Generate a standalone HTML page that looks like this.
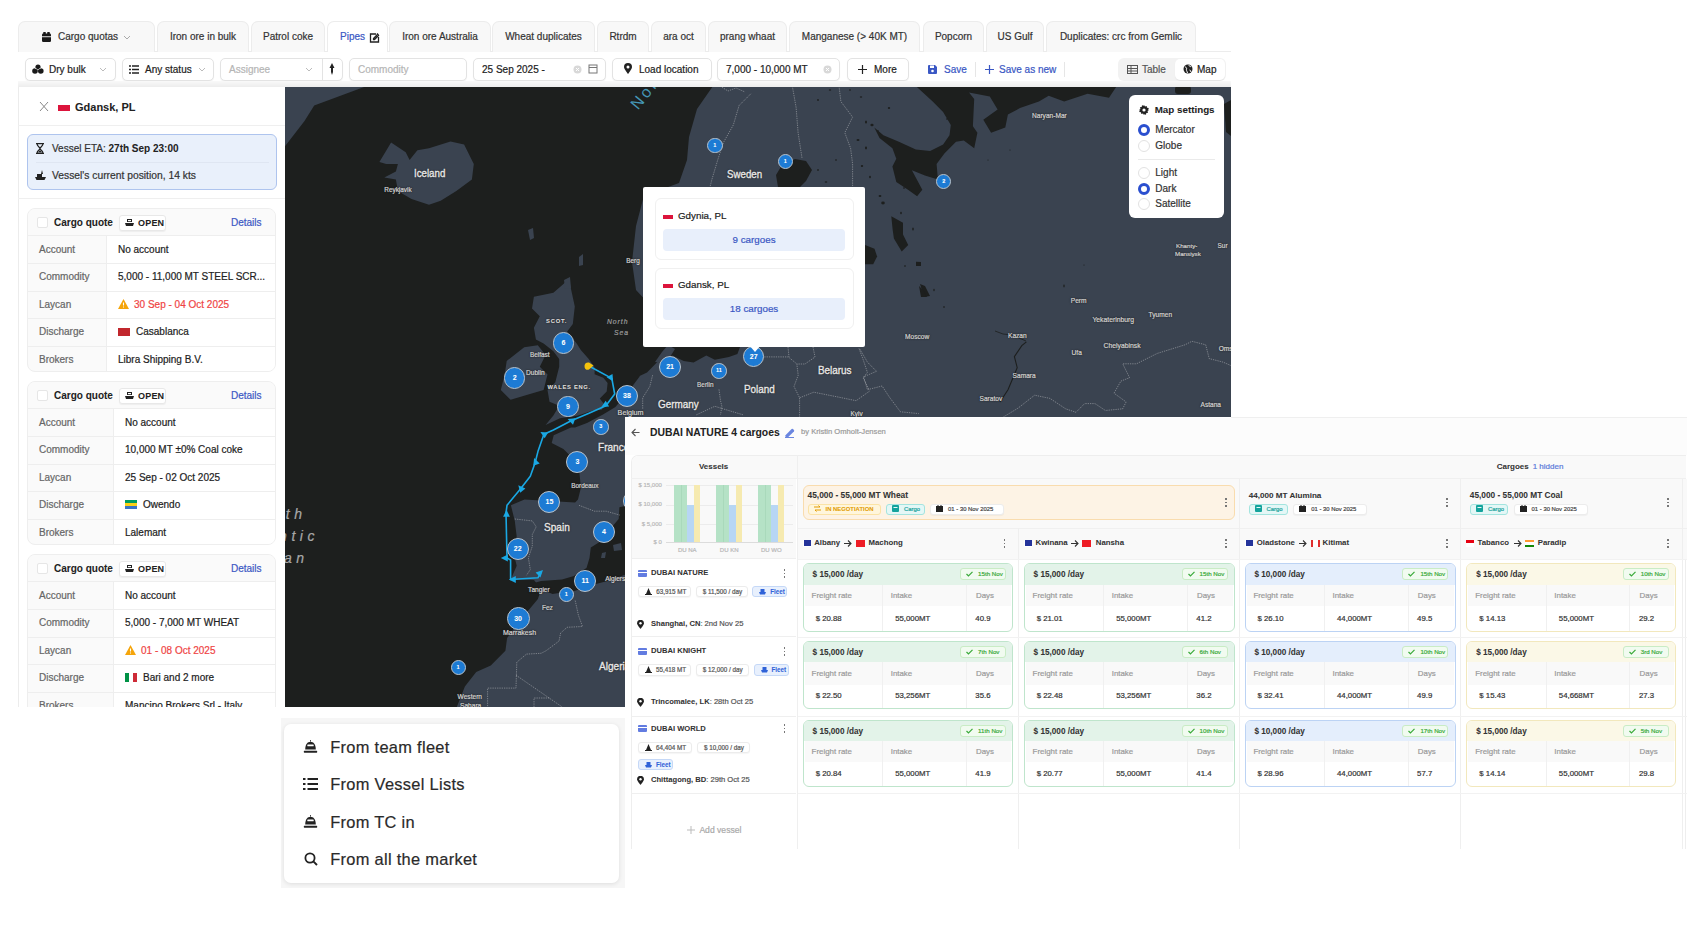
<!DOCTYPE html>
<html><head><meta charset="utf-8">
<style>
*{box-sizing:border-box;margin:0;padding:0}
html,body{width:1698px;height:925px;overflow:hidden;background:#fff;font-family:"Liberation Sans",sans-serif;color:#222;position:relative}
body{-webkit-text-stroke:0.2px currentColor}
[style*="font-weight:700"],b{-webkit-text-stroke:0.05px currentColor}
.a{position:absolute;white-space:nowrap}
.tab{position:absolute;top:21px;height:31px;background:#f8f8f8;border:1px solid #ececec;border-bottom:none;border-radius:7px 7px 0 0;font-size:10px;line-height:30px;text-align:center;color:#333}
.chip{position:absolute;top:58px;height:23px;background:#fff;border:1px solid #e3e3e3;border-radius:5px;box-shadow:0 1px 1px rgba(0,0,0,.05);font-size:10px;line-height:21px;color:#222}
.ph{color:#b5b5b5}
.lbl{font-size:10px;color:#666}
.val{font-size:10px;color:#222}
</style></head><body>

<!-- TABS -->
<div class="a" style="left:18px;top:51px;width:1213px;height:1px;background:#ececec"></div>
<div class="tab" style="left:18px;width:137px;text-align:left">
  <svg class="a" style="left:23px;top:10px" width="9" height="10" viewBox="0 0 9 10"><rect x="0" y="1.5" width="9" height="8.5" rx="1.2" fill="#1a1a1a"/><rect x="1.2" y="0" width="2.6" height="2.5" rx=".6" fill="#1a1a1a"/><rect x="5.2" y="0" width="2.6" height="2.5" rx=".6" fill="#1a1a1a"/><rect x="0" y="4.3" width="9" height="0.9" fill="#f8f8f8"/></svg>
  <span class="a" style="left:39px;top:0">Cargo quotas</span>
  <svg class="a" style="left:104px;top:13px" width="8" height="5" viewBox="0 0 8 5"><path d="M1 1l3 3 3-3" stroke="#aaa" fill="none" stroke-width="1"/></svg>
</div>
<div class="tab" style="left:157px;width:92px">Iron ore in bulk</div>
<div class="tab" style="left:251px;width:74px">Patrol coke</div>
<div class="tab" style="left:327px;width:61px;background:#fff;color:#3a57c4;text-align:left;padding-left:12px">Pipes
  <svg class="a" style="left:41px;top:10px" width="11" height="11" viewBox="0 0 11 11"><path d="M8 1.5l1.5 1.5M4.5 6.5l4-4 1 1-4 4H4.5z" stroke="#222" stroke-width="1.3" fill="none"/><path d="M7 2H1.5v8h8V5" stroke="#222" stroke-width="1.3" fill="none"/></svg>
</div>
<div class="tab" style="left:389px;width:102px">Iron ore Australia</div>
<div class="tab" style="left:492px;width:103px">Wheat duplicates</div>
<div class="tab" style="left:597px;width:52px">Rtrdm</div>
<div class="tab" style="left:651px;width:55px">ara oct</div>
<div class="tab" style="left:708px;width:79px">prang whaat</div>
<div class="tab" style="left:789px;width:131px">Manganese (&gt; 40K MT)</div>
<div class="tab" style="left:923px;width:61px">Popcorn</div>
<div class="tab" style="left:986px;width:58px">US Gulf</div>
<div class="tab" style="left:1046px;width:150px">Duplicates: crc from Gemlic</div>

<!-- FILTER BAR -->
<div class="a" style="left:18px;top:52px;width:1213px;height:34px;background:#fff"></div>
<div class="a" style="left:18px;top:83px;width:267px;height:4px;background:linear-gradient(#fff,#eee)"></div>
<div class="chip" style="left:25px;width:91px">
  <span class="a" style="left:23px;top:0">Dry bulk</span>
</div>
<div class="chip" style="left:122px;width:92px">
  <span class="a" style="left:22px;top:0">Any status</span>
</div>
<div class="chip" style="left:220px;width:123px">
  <span class="a ph" style="left:8px;top:0">Assignee</span>
  <div class="a" style="left:101px;top:0;width:1px;height:21px;background:#e3e3e3"></div>
</div>
<div class="chip" style="left:349px;width:118px"><span class="a ph" style="left:8px;top:0">Commodity</span></div>
<div class="chip" style="left:473px;width:133px"><span class="a" style="left:8px;top:0">25 Sep 2025 -</span></div>
<div class="chip" style="left:612px;width:100px"><span class="a" style="left:26px;top:0">Load location</span></div>
<div class="chip" style="left:717px;width:123px"><span class="a" style="left:8px;top:0">7,000 - 10,000 MT</span></div>
<div class="chip" style="left:847px;width:62px"><span class="a" style="left:26px;top:0">More</span></div>
<span class="a" style="left:944px;top:58px;font-size:10px;line-height:23px;color:#3a57c4">Save</span>
<div class="a" style="left:975px;top:62px;width:1px;height:15px;background:#e6e6e6"></div>
<span class="a" style="left:999px;top:58px;font-size:10px;line-height:23px;color:#3a57c4">Save as new</span>
<div class="a" style="left:1064px;top:62px;width:1px;height:15px;background:#e6e6e6"></div>
<div class="a" style="left:1118px;top:58px;width:108px;height:23px;background:#f2f2f2;border-radius:6px"></div>
<div class="a" style="left:1175px;top:59px;width:50px;height:21px;background:#fff;border-radius:5px;box-shadow:0 1px 1px rgba(0,0,0,.06)"></div>
<span class="a" style="left:1142px;top:58px;font-size:10px;line-height:23px;color:#555">Table</span>
<span class="a" style="left:1197px;top:58px;font-size:10px;line-height:23px;color:#222">Map</span>


<svg class="a" style="left:32px;top:64px" width="12" height="10" viewBox="0 0 12 10"><circle cx="6" cy="3" r="2.6" fill="#1a1a1a"/><circle cx="3" cy="7" r="2.8" fill="#1a1a1a"/><circle cx="8.8" cy="7" r="2.8" fill="#1a1a1a"/><path d="M3 4.3a2.8 2.8 0 0 1 2.5 1.5M8.8 4.3a2.8 2.8 0 0 0-2.5 1.5" stroke="#fff" stroke-width=".7" fill="none"/></svg>
<svg class="a" style="left:99px;top:67px" width="8" height="5" viewBox="0 0 8 5"><path d="M1 1l3 3 3-3" stroke="#bbb" fill="none" stroke-width="1"/></svg>
<svg class="a" style="left:129px;top:65px" width="10" height="9" viewBox="0 0 10 9"><path d="M0 1h2M3 1h7M0 4.5h2M3 4.5h7M0 8h2M3 8h7" stroke="#222" stroke-width="1.3"/></svg>
<svg class="a" style="left:198px;top:67px" width="8" height="5" viewBox="0 0 8 5"><path d="M1 1l3 3 3-3" stroke="#bbb" fill="none" stroke-width="1"/></svg>
<svg class="a" style="left:305px;top:67px" width="8" height="5" viewBox="0 0 8 5"><path d="M1 1l3 3 3-3" stroke="#bbb" fill="none" stroke-width="1"/></svg>
<svg class="a" style="left:329px;top:63px" width="6" height="12" viewBox="0 0 6 12"><path d="M3 0L5.5 5H.5z M2 5h2v4l-1 3-1-3z" fill="#222"/></svg>
<svg class="a" style="left:573px;top:65px" width="9" height="9" viewBox="0 0 9 9"><circle cx="4.5" cy="4.5" r="4" fill="#d8d8d8"/><path d="M3 3l3 3M6 3L3 6" stroke="#fff" stroke-width="1"/></svg>
<svg class="a" style="left:588px;top:64px" width="10" height="10" viewBox="0 0 10 10"><rect x="1" y="1" width="8" height="8" fill="none" stroke="#777" stroke-width="1"/><path d="M1 3.5h8" stroke="#777" stroke-width="1"/></svg>
<svg class="a" style="left:624px;top:63px" width="8" height="11" viewBox="0 0 8 11"><path d="M4 11C4 11 0 6 0 4a4 4 0 018 0c0 2-4 7-4 7z" fill="#222"/><circle cx="4" cy="4" r="1.5" fill="#fff"/></svg>
<svg class="a" style="left:823px;top:65px" width="9" height="9" viewBox="0 0 9 9"><circle cx="4.5" cy="4.5" r="4" fill="#d8d8d8"/><path d="M3 3l3 3M6 3L3 6" stroke="#fff" stroke-width="1"/></svg>
<svg class="a" style="left:858px;top:65px" width="9" height="9" viewBox="0 0 9 9"><path d="M4.5 0v9M0 4.5h9" stroke="#222" stroke-width="1.2"/></svg>
<svg class="a" style="left:928px;top:65px" width="9" height="9" viewBox="0 0 9 9"><path d="M0 1a1 1 0 011-1h6l2 2v6a1 1 0 01-1 1H1a1 1 0 01-1-1z" fill="#3a57c4"/><rect x="2" y="0.5" width="4" height="2.5" fill="#fff"/><circle cx="4.5" cy="6" r="1.3" fill="#fff"/></svg>
<svg class="a" style="left:985px;top:65px" width="9" height="9" viewBox="0 0 9 9"><path d="M4.5 0v9M0 4.5h9" stroke="#3a57c4" stroke-width="1.2"/></svg>
<svg class="a" style="left:1127px;top:65px" width="11" height="9" viewBox="0 0 11 9"><rect x=".5" y=".5" width="10" height="8" fill="none" stroke="#555" stroke-width="1"/><path d="M.5 3.5h10M.5 6h10M4 .5v8" stroke="#555" stroke-width="1"/></svg>
<svg class="a" style="left:1183px;top:64px" width="10" height="10" viewBox="0 0 10 10"><circle cx="5" cy="5" r="4.5" fill="#222"/><path d="M2 3c1 0 2 1 1.5 2S4 7 4.5 9M6 1c0 1 1 2 2 1.5M6.5 6c1 0 1.5 1 1 2" stroke="#fff" stroke-width="1" fill="none"/></svg>

<!-- LEFT PANEL -->
<div class="a" style="left:18px;top:86px;width:1px;height:621px;background:#ececec"></div><div id="left" class="a" style="left:18px;top:86px;width:267px;height:621px;background:transparent;overflow:hidden">
<svg class="a" style="left:21px;top:16px" width="10" height="9" viewBox="0 0 10 9"><path d="M1 0l8 9M9 0L1 9" stroke="#888" stroke-width="1"/></svg>
<div class="a" style="left:40px;top:19px;width:12px;height:6px;background:#dc143c"></div>
<span class="a" style="left:57px;top:13px;font-size:11px;font-weight:700;line-height:17px;color:#222">Gdansk, PL</span>
<div class="a" style="left:0;top:39px;width:267px;height:1px;background:#efefef"></div>
<div class="a" style="left:9px;top:48px;width:250px;height:56px;background:#e9f0fb;border:1px solid #aec4ee;border-radius:6px"></div>
<svg class="a" style="left:18px;top:57px" width="8" height="11" viewBox="0 0 8 11"><path d="M0 .6h8M0 10.4h8M1 .6c0 3 3 3.5 3 4.9S1 7.4 1 10.4M7 .6c0 3-3 3.5-3 4.9s3 1.9 3 4.9" stroke="#222" stroke-width="1.2" fill="none"/><path d="M2 9.5L4 7l2 2.5z" fill="#222"/></svg>
<span class="a" style="left:34px;top:55px;font-size:10px;line-height:15px;color:#333">Vessel ETA: <b style="color:#222">27th Sep 23:00</b></span>
<div class="a" style="left:18px;top:76px;width:233px;height:1px;background:#dfe6f2"></div>
<svg class="a" style="left:17px;top:84px" width="11" height="10" viewBox="0 0 11 10"><path d="M0 7h11l-1.5 3H1.5z M2 4h5v3H2z M7 0l1 4H6z" fill="#222"/></svg>
<span class="a" style="left:34px;top:82px;font-size:10.3px;line-height:15px;color:#333">Vessel's current position, 14 kts</span>
<div class="a" style="left:0;top:112px;width:267px;height:1px;background:#efefef"></div>
<div class="a" style="left:9px;top:122px;width:249px;height:164px;border:1px solid #eeeeee;border-radius:8px;overflow:hidden;background:#fafafa"><div class="a" style="left:0;top:0;width:249px;height:27px;background:#fafafa;border-bottom:1px solid #eee"></div><div class="a" style="left:9px;top:8px;width:11px;height:11px;background:#fff;border:1px solid #e6e6e6;border-radius:2px"></div><span class="a" style="left:26px;top:6px;font-size:10px;font-weight:700;line-height:15px;color:#222">Cargo quote</span><div class="a" style="left:91px;top:6px;width:47px;height:16px;background:#fff;border:1px solid #e8e8e8;border-radius:3px;box-shadow:0 1px 1px rgba(0,0,0,.05)"></div><svg class="a" style="left:97px;top:10px" width="9" height="8" viewBox="0 0 9 8"><path d="M2 0h5v3H2z M0 4h9l-1 3H1z" fill="#222"/><rect x="3" y="1" width="3" height="1.2" fill="#fff"/></svg><span class="a" style="left:110px;top:7px;font-size:9px;font-weight:700;line-height:14px;color:#222;letter-spacing:.2px">OPEN</span><span class="a" style="left:203px;top:6px;font-size:10px;line-height:15px;color:#3a57c4">Details</span><div class="a" style="left:78px;top:27px;width:171px;height:137px;background:#fff;border-left:1px solid #eee"></div><span class="a lbl" style="left:11px;top:27.0px;line-height:27px">Account</span><span class="a val" style="left:90px;top:27.0px;line-height:27px">No account</span><div class="a" style="left:0;top:54.4px;width:249px;height:1px;background:#eee"></div><span class="a lbl" style="left:11px;top:54.4px;line-height:27px">Commodity</span><span class="a val" style="left:90px;top:54.4px;line-height:27px">5,000 - 11,000 MT STEEL SCR...</span><div class="a" style="left:0;top:81.8px;width:249px;height:1px;background:#eee"></div><span class="a lbl" style="left:11px;top:81.8px;line-height:27px">Laycan</span><span class="a val" style="left:90px;top:81.8px;line-height:27px"><svg style="vertical-align:-1px;margin-right:5px" width="11" height="10" viewBox="0 0 11 10"><path d="M5.5 0L11 10H0z" fill="#f5a50b"/><path d="M5.5 3.5v3M5.5 7.5v1" stroke="#fff" stroke-width="1.1"/></svg><span style="color:#ef4444">30 Sep - 04 Oct 2025</span></span><div class="a" style="left:0;top:109.2px;width:249px;height:1px;background:#eee"></div><span class="a lbl" style="left:11px;top:109.2px;line-height:27px">Discharge</span><span class="a val" style="left:90px;top:109.2px;line-height:27px"><span style="display:inline-block;width:12px;height:8px;vertical-align:-1px;margin-right:6px;background:#c1272d"></span>Casablanca</span><div class="a" style="left:0;top:136.6px;width:249px;height:1px;background:#eee"></div><span class="a lbl" style="left:11px;top:136.6px;line-height:27px">Brokers</span><span class="a val" style="left:90px;top:136.6px;line-height:27px">Libra Shipping B.V.</span></div><div class="a" style="left:9px;top:295px;width:249px;height:164px;border:1px solid #eeeeee;border-radius:8px;overflow:hidden;background:#fafafa"><div class="a" style="left:0;top:0;width:249px;height:27px;background:#fafafa;border-bottom:1px solid #eee"></div><div class="a" style="left:9px;top:8px;width:11px;height:11px;background:#fff;border:1px solid #e6e6e6;border-radius:2px"></div><span class="a" style="left:26px;top:6px;font-size:10px;font-weight:700;line-height:15px;color:#222">Cargo quote</span><div class="a" style="left:91px;top:6px;width:47px;height:16px;background:#fff;border:1px solid #e8e8e8;border-radius:3px;box-shadow:0 1px 1px rgba(0,0,0,.05)"></div><svg class="a" style="left:97px;top:10px" width="9" height="8" viewBox="0 0 9 8"><path d="M2 0h5v3H2z M0 4h9l-1 3H1z" fill="#222"/><rect x="3" y="1" width="3" height="1.2" fill="#fff"/></svg><span class="a" style="left:110px;top:7px;font-size:9px;font-weight:700;line-height:14px;color:#222;letter-spacing:.2px">OPEN</span><span class="a" style="left:203px;top:6px;font-size:10px;line-height:15px;color:#3a57c4">Details</span><div class="a" style="left:85px;top:27px;width:164px;height:137px;background:#fff;border-left:1px solid #eee"></div><span class="a lbl" style="left:11px;top:27.0px;line-height:27px">Account</span><span class="a val" style="left:97px;top:27.0px;line-height:27px">No account</span><div class="a" style="left:0;top:54.4px;width:249px;height:1px;background:#eee"></div><span class="a lbl" style="left:11px;top:54.4px;line-height:27px">Commodity</span><span class="a val" style="left:97px;top:54.4px;line-height:27px">10,000 MT &plusmn;0% Coal coke</span><div class="a" style="left:0;top:81.8px;width:249px;height:1px;background:#eee"></div><span class="a lbl" style="left:11px;top:81.8px;line-height:27px">Laycan</span><span class="a val" style="left:97px;top:81.8px;line-height:27px">25 Sep - 02 Oct 2025</span><div class="a" style="left:0;top:109.2px;width:249px;height:1px;background:#eee"></div><span class="a lbl" style="left:11px;top:109.2px;line-height:27px">Discharge</span><span class="a val" style="left:97px;top:109.2px;line-height:27px"><span style="display:inline-block;width:12px;height:9px;vertical-align:-1px;margin-right:6px;background:linear-gradient(#009e60 0 33%,#fcd116 33% 66%,#3a75c4 66%)"></span>Owendo</span><div class="a" style="left:0;top:136.6px;width:249px;height:1px;background:#eee"></div><span class="a lbl" style="left:11px;top:136.6px;line-height:27px">Brokers</span><span class="a val" style="left:97px;top:136.6px;line-height:27px">Lalemant</span></div><div class="a" style="left:9px;top:468px;width:249px;height:164px;border:1px solid #eeeeee;border-radius:8px;overflow:hidden;background:#fafafa"><div class="a" style="left:0;top:0;width:249px;height:27px;background:#fafafa;border-bottom:1px solid #eee"></div><div class="a" style="left:9px;top:8px;width:11px;height:11px;background:#fff;border:1px solid #e6e6e6;border-radius:2px"></div><span class="a" style="left:26px;top:6px;font-size:10px;font-weight:700;line-height:15px;color:#222">Cargo quote</span><div class="a" style="left:91px;top:6px;width:47px;height:16px;background:#fff;border:1px solid #e8e8e8;border-radius:3px;box-shadow:0 1px 1px rgba(0,0,0,.05)"></div><svg class="a" style="left:97px;top:10px" width="9" height="8" viewBox="0 0 9 8"><path d="M2 0h5v3H2z M0 4h9l-1 3H1z" fill="#222"/><rect x="3" y="1" width="3" height="1.2" fill="#fff"/></svg><span class="a" style="left:110px;top:7px;font-size:9px;font-weight:700;line-height:14px;color:#222;letter-spacing:.2px">OPEN</span><span class="a" style="left:203px;top:6px;font-size:10px;line-height:15px;color:#3a57c4">Details</span><div class="a" style="left:85px;top:27px;width:164px;height:137px;background:#fff;border-left:1px solid #eee"></div><span class="a lbl" style="left:11px;top:27.0px;line-height:27px">Account</span><span class="a val" style="left:97px;top:27.0px;line-height:27px">No account</span><div class="a" style="left:0;top:54.4px;width:249px;height:1px;background:#eee"></div><span class="a lbl" style="left:11px;top:54.4px;line-height:27px">Commodity</span><span class="a val" style="left:97px;top:54.4px;line-height:27px">5,000 - 7,000 MT WHEAT</span><div class="a" style="left:0;top:81.8px;width:249px;height:1px;background:#eee"></div><span class="a lbl" style="left:11px;top:81.8px;line-height:27px">Laycan</span><span class="a val" style="left:97px;top:81.8px;line-height:27px"><svg style="vertical-align:-1px;margin-right:5px" width="11" height="10" viewBox="0 0 11 10"><path d="M5.5 0L11 10H0z" fill="#f5a50b"/><path d="M5.5 3.5v3M5.5 7.5v1" stroke="#fff" stroke-width="1.1"/></svg><span style="color:#ef4444">01 - 08 Oct 2025</span></span><div class="a" style="left:0;top:109.2px;width:249px;height:1px;background:#eee"></div><span class="a lbl" style="left:11px;top:109.2px;line-height:27px">Discharge</span><span class="a val" style="left:97px;top:109.2px;line-height:27px"><span style="display:inline-block;width:12px;height:9px;vertical-align:-1px;margin-right:6px;background:linear-gradient(90deg,#009246 0 33%,#fff 33% 66%,#ce2b37 66%)"></span>Bari and 2 more</span><div class="a" style="left:0;top:136.6px;width:249px;height:1px;background:#eee"></div><span class="a lbl" style="left:11px;top:136.6px;line-height:27px">Brokers</span><span class="a val" style="left:97px;top:136.6px;line-height:27px">Mancino Brokers Srl - Italy</span></div></div>

<!-- MAP -->
<div id="map" class="a" style="left:285px;top:86px;width:946px;height:621px;background:#1c1e1f;overflow:hidden"><svg class="a" style="left:0;top:0" width="946" height="621" viewBox="285 86 946 621">
<rect x="285" y="86" width="946" height="621" fill="#3a4350"/>
<polygon points="285.0,86.0 713.0,86.0 697.0,109.0 689.0,137.0 687.0,160.0 679.0,183.0 660.0,190.0 642.8,200.0 636.0,226.0 632.0,262.0 636.0,290.0 650.0,305.0 700.0,320.0 740.0,347.0 737.4,354.0 728.9,356.9 714.8,359.7 706.3,355.4 693.6,362.5 683.7,361.1 672.4,355.4 658.3,361.1 647.0,372.4 638.5,376.6 640.0,376.0 628.0,392.0 615.4,407.1 603.0,414.5 587.0,423.0 575.0,427.5 571.0,427.5 553.7,435.3 551.7,443.1 563.4,448.9 571.2,456.7 579.0,468.4 580.9,487.8 578.0,499.5 575.1,502.4 524.5,499.5 510.9,505.3 514.8,520.9 516.7,536.5 512.8,550.1 516.7,565.7 510.9,579.3 534.0,580.0 541.1,589.2 537.9,598.9 529.8,608.7 520.0,620.0 507.1,637.9 505.4,650.8 490.8,665.4 476.2,671.9 464.9,686.5 456.8,707.0 285.0,707.0" fill="#1d1f1e" />
<polygon points="915.8,86.0 932.7,101.6 943.1,112.0 950.8,124.9 949.5,135.3 943.1,144.4 930.1,150.9 915.8,149.6 898.9,141.8 883.4,135.3 874.3,127.5 879.5,137.9 892.4,148.3 896.3,158.7 892.4,166.5 896.3,182.0 908.0,189.8 917.1,196.3 922.3,189.8 911.9,170.3 924.9,175.5 937.9,179.4 936.6,163.9 944.4,153.5 956.0,141.8 963.8,140.5 974.2,148.3 977.4,132.7 972.9,126.2 974.2,99.0 969.0,92.5 989.8,96.4 997.6,109.4 983.3,119.7 991.1,132.7 1005.3,127.5 1007.9,114.5 1020.0,108.1 1038.9,101.6 1048.7,95.7 1064.2,101.6 1087.6,93.8 1109.0,97.7 1116.8,86.0" fill="#1d1f1e" />
<polygon points="625.0,506.0 619.4,507.3 618.7,519.0 614.2,524.2 601.2,541.0 590.8,547.5 589.5,558.0 586.5,568.0 573.9,576.0 562.0,579.5 541.0,581.0 534.0,583.0 541.1,589.2 552.5,594.1 562.2,592.4 575.2,590.8 588.2,586.0 596.0,583.9 606.4,581.3 625.0,574.8" fill="#1d1f1e" />
<polygon points="778.0,187.0 776.0,175.0 782.0,165.0 795.0,159.0 806.0,161.0 812.0,170.0 806.0,181.0 800.0,187.0" fill="#1d1f1e" />
<polygon points="891.3,216.3 903.0,222.8 903.0,234.5 908.2,244.9 901.7,251.4 893.9,238.4 892.6,229.3" fill="#1d1f1e" />
<polygon points="865.0,244.9 874.5,248.8 877.1,256.5 873.2,264.3 865.0,264.3" fill="#1d1f1e" />
<rect x="1175" y="86" width="16" height="8" rx="3" fill="#1d1f1e"/>
<polygon points="1224.0,104.0 1231.0,100.0 1231.0,136.0 1226.0,132.0" fill="#1d1f1e" />
<polygon points="916.0,261.7 921.0,262.0 921.0,266.0 916.0,266.0" fill="#1d1f1e" />
<polygon points="920.0,284.0 925.0,286.0 930.0,296.0 924.0,297.0" fill="#1d1f1e" />
<polygon points="919.0,286.0 923.0,290.0 927.0,297.0 921.0,297.0" fill="#1d1f1e" />
<ellipse cx="861" cy="97" rx="1.2" ry="0.8" fill="#1d1f1e"/>
<ellipse cx="866" cy="122" rx="1" ry="1.5" fill="#1d1f1e"/>
<ellipse cx="872" cy="125" rx="1.6" ry="1.2" fill="#1d1f1e"/>
<ellipse cx="878" cy="131" rx="1" ry="0.8" fill="#1d1f1e"/>
<ellipse cx="889" cy="108" rx="1.2" ry="1" fill="#1d1f1e"/>
<ellipse cx="858" cy="140" rx="1.5" ry="1" fill="#1d1f1e"/>
<ellipse cx="866" cy="148" rx="1" ry="1.4" fill="#1d1f1e"/>
<ellipse cx="880" cy="196" rx="1.4" ry="1" fill="#1d1f1e"/>
<ellipse cx="883" cy="203" rx="1.8" ry="1.4" fill="#1d1f1e"/>
<ellipse cx="901" cy="213" rx="0.8" ry="1.2" fill="#1d1f1e"/>
<ellipse cx="913" cy="229" rx="0.8" ry="1.6" fill="#1d1f1e"/>
<ellipse cx="904" cy="188" rx="1" ry="0.8" fill="#1d1f1e"/>
<ellipse cx="947" cy="119" rx="1" ry="0.8" fill="#1d1f1e"/>
<ellipse cx="862" cy="166" rx="1.2" ry="0.9" fill="#1d1f1e"/>
<ellipse cx="870" cy="177" rx="0.9" ry="1.3" fill="#1d1f1e"/>
<ellipse cx="850" cy="90" rx="1" ry="0.7" fill="#1d1f1e"/>
<ellipse cx="905" cy="266" rx="0.7" ry="1" fill="#1d1f1e"/>
<ellipse cx="934" cy="290" rx="0.7" ry="1.3" fill="#1d1f1e"/>
<ellipse cx="988" cy="160" rx="0.6" ry="0.6" fill="#1d1f1e"/>
<ellipse cx="1010" cy="150" rx="0.6" ry="0.6" fill="#1d1f1e"/>
<ellipse cx="944" cy="307" rx="1" ry="0.7" fill="#1d1f1e"/>
<ellipse cx="830" cy="90" rx="1.2" ry="0.8" fill="#1d1f1e"/>
<ellipse cx="818" cy="100" rx="0.9" ry="0.9" fill="#1d1f1e"/>
<ellipse cx="836" cy="160" rx="1" ry="0.8" fill="#1d1f1e"/>
<ellipse cx="818" cy="170" rx="0.8" ry="1" fill="#1d1f1e"/>
<ellipse cx="826" cy="182" rx="1.3" ry="0.8" fill="#1d1f1e"/>
<ellipse cx="1064" cy="286" rx="0.7" ry="1.4" fill="#1d1f1e"/>
<ellipse cx="1084" cy="265" rx="0.6" ry="0.6" fill="#1d1f1e"/>
<polyline points="1026.4,341.9 1021.8,345.6 1014.4,356.6 1017.2,367.6 1012.6,378.7 1008.0,389.7 1000.0,402.0" fill="none" stroke="#1d1f1e" stroke-width="1.1"/>
<polyline points="995.0,331.0 1003.0,334.0 1012.0,335.0 1026.0,341.0" fill="none" stroke="#1d1f1e" stroke-width="0.8"/>
<polygon points="285.0,86.0 366.8,86.0 314.2,105.5 304.5,121.0 285.0,146.3" fill="#3a4350" />
<polygon points="379.4,161.9 391.1,142.4 405.7,152.2 409.6,160.0 417.4,150.2 429.0,148.3 450.5,141.5 464.1,144.4 473.8,163.9 471.9,179.4 456.3,191.1 440.7,200.8 429.0,204.7 411.5,198.9 397.9,191.1 395.9,179.4 384.3,177.5 395.9,171.6 397.9,163.9 386.2,163.9" fill="#3a4350" />
<polygon points="533.9,296.7 553.4,292.8 568.9,279.2 574.8,306.4 572.8,323.9 567.0,331.7 576.7,343.4 580.8,350.0 588.5,358.7 594.6,367.3 594.6,374.2 603.3,377.7 607.6,382.9 606.7,391.5 599.8,398.4 605.0,405.4 601.5,409.7 592.9,410.6 577.3,415.7 560.0,418.3 545.6,425.1 553.4,415.4 559.2,405.7 549.5,401.8 547.5,390.1 555.3,382.3 559.2,366.8 559.2,359.0 553.4,351.2 543.6,343.4 535.9,339.5 533.9,327.8 539.8,316.2 532.0,308.4" fill="#3a4350" />
<polygon points="506.7,360.9 524.2,347.3 537.8,345.3 545.6,355.1 539.8,366.8 547.5,374.5 543.6,390.1 530.0,394.0 510.6,399.8 500.8,390.1 504.7,374.5" fill="#3a4350" />
<polygon points="579.0,257.0 583.0,254.0 583.0,265.0 579.0,266.0" fill="#3a4350" />
<polygon points="564.0,280.0 570.0,277.0 571.0,288.0 565.0,289.0" fill="#3a4350" />
<polygon points="528.0,230.0 533.0,228.0 534.0,238.0 530.0,240.0" fill="#3a4350" />
<polygon points="613.0,545.0 621.0,543.0 622.0,550.0 614.0,551.0" fill="#3a4350" />
<polygon points="602.0,553.0 606.0,552.0 605.0,558.0 601.0,558.0" fill="#3a4350" />
<polygon points="655.0,362.0 662.0,352.0 668.0,345.0 675.0,349.0 670.0,357.0 664.0,363.0" fill="#3a4350" />
<polyline points="792.3,86.0 796.1,107.4 798.1,132.7 802.0,158.0" fill="none" stroke="rgba(230,230,230,0.55)" stroke-width="0.7" stroke-dasharray="1.3 1"/>
<polyline points="750.8,93.8 739.1,105.5 733.3,125.0 723.5,142.4 717.7,160.0 711.9,179.4 710.0,187.0" fill="none" stroke="rgba(230,230,230,0.55)" stroke-width="0.7" stroke-dasharray="1.3 1"/>
<polyline points="839.0,86.0 840.9,101.6 852.6,117.1 844.8,132.7 850.6,148.3 852.6,163.9 852.6,187.0" fill="none" stroke="rgba(230,230,230,0.55)" stroke-width="0.7" stroke-dasharray="1.3 1"/>
<polyline points="719.0,389.4 720.5,400.7 721.9,406.3 720.5,414.8" fill="none" stroke="rgba(230,230,230,0.55)" stroke-width="0.7" stroke-dasharray="1.3 1"/>
<polyline points="764.3,356.9 788.3,356.9 796.8,363.9 798.2,375.2 794.0,386.5 799.6,397.8 799.6,417.0" fill="none" stroke="rgba(230,230,230,0.55)" stroke-width="0.7" stroke-dasharray="1.3 1"/>
<polyline points="799.6,397.8 813.7,392.2 835.0,396.4 856.1,400.7 870.0,390.8" fill="none" stroke="rgba(230,230,230,0.55)" stroke-width="0.7" stroke-dasharray="1.3 1"/>
<polyline points="788.0,347.0 789.0,356.9" fill="none" stroke="rgba(230,230,230,0.55)" stroke-width="0.7" stroke-dasharray="1.3 1"/>
<polyline points="813.0,347.0 815.0,357.0 805.0,364.0 797.0,364.0" fill="none" stroke="rgba(230,230,230,0.55)" stroke-width="0.7" stroke-dasharray="1.3 1"/>
<polyline points="859.0,348.4 863.2,359.7 867.4,372.4 863.2,378.0 868.9,389.4" fill="none" stroke="rgba(230,230,230,0.55)" stroke-width="0.7" stroke-dasharray="1.3 1"/>
<polyline points="696.4,414.8 714.8,406.3 728.9,410.6 743.1,414.8" fill="none" stroke="rgba(230,230,230,0.55)" stroke-width="0.7" stroke-dasharray="1.3 1"/>
<polyline points="652.6,375.2 649.8,386.5 642.7,397.8 642.7,409.2" fill="none" stroke="rgba(230,230,230,0.55)" stroke-width="0.7" stroke-dasharray="1.3 1"/>
<polyline points="514.8,519.0 532.3,520.9 536.2,526.8 532.3,534.5 532.3,546.2 528.4,557.9 530.3,569.6 526.4,575.4" fill="none" stroke="rgba(230,230,230,0.55)" stroke-width="0.7" stroke-dasharray="1.3 1"/>
<polyline points="579.0,505.3 594.5,511.2 606.2,511.2 619.8,515.1" fill="none" stroke="rgba(230,230,230,0.55)" stroke-width="0.7" stroke-dasharray="1.3 1"/>
<polyline points="575.2,600.6 578.4,615.2 582.5,626.5 567.1,627.3 560.6,633.0 559.0,641.1 546.0,650.8 541.1,653.3 526.5,654.1 516.8,662.2 516.0,688.1 487.6,688.1 487.6,707.0" fill="none" stroke="rgba(230,230,230,0.55)" stroke-width="0.7" stroke-dasharray="1.3 1"/>
<polyline points="516.0,675.2 562.2,707.0" fill="none" stroke="rgba(230,230,230,0.55)" stroke-width="0.7" stroke-dasharray="1.3 1"/>
<polyline points="534.0,707.0 534.0,698.0 550.0,698.0" fill="none" stroke="rgba(230,230,230,0.55)" stroke-width="0.7" stroke-dasharray="1.3 1"/>
<polyline points="860.0,349.3 867.4,362.1 876.5,371.3 863.7,376.8 867.4,389.7 882.1,386.0 889.4,397.1 900.4,411.8 918.8,413.6" fill="none" stroke="rgba(230,230,230,0.55)" stroke-width="0.7" stroke-dasharray="1.3 1"/>
<polyline points="1003.4,417.0 1018.1,408.1 1034.6,395.2 1050.0,398.4 1065.6,408.8 1076.0,412.3 1084.6,403.6 1095.0,403.6 1105.4,410.5 1122.7,408.8 1126.1,401.9 1114.0,393.2 1120.9,381.1 1129.6,377.7 1122.7,363.8 1136.5,363.8 1157.3,353.4 1185.0,344.8 1191.9,341.3 1205.7,344.8 1209.2,358.6 1223.0,362.1 1231.0,365.6" fill="none" stroke="rgba(230,230,230,0.55)" stroke-width="0.7" stroke-dasharray="1.3 1"/>
<polyline points="720.0,86.0 728.0,91.0 736.0,88.0 745.0,92.0" fill="none" stroke="rgba(230,230,230,0.55)" stroke-width="0.7" stroke-dasharray="1.3 1"/>
<polyline points="590.3,366.8 611.8,378.4 614.7,394.0 605.9,405.7 588.4,413.5 571.2,420.7 553.4,430.0 543.9,434.3 538.1,450.9 535.2,462.5 530.3,476.2 520.6,488.8 507.0,505.3 506.0,513.1 507.0,558.0 510.6,560.0 510.6,579.5 537.9,577.8 541.1,572.2" fill="none" stroke="#1aa8e4" stroke-width="1.6" stroke-linejoin="round"/>
<polygon points="613.1,381.6 606.7,377.3 612.5,373.9" fill="#1aa8e4" />
<polygon points="601.4,407.1 605.7,400.7 609.1,406.5" fill="#1aa8e4" />
<polygon points="567.6,419.1 575.3,418.3 573.0,424.7" fill="#1aa8e4" />
<polygon points="540.4,431.9 548.1,432.5 544.7,438.3" fill="#1aa8e4" />
<polygon points="534.1,458.1 539.7,463.5 533.3,465.8" fill="#1aa8e4" />
<polygon points="518.3,485.3 525.4,488.5 520.2,492.8" fill="#1aa8e4" />
<polygon points="506.5,509.8 509.9,516.8 503.1,516.8" fill="#1aa8e4" />
<polygon points="500.8,558.0 507.8,554.6 507.8,561.4" fill="#1aa8e4" />
<polygon points="508.8,579.5 515.8,576.1 515.8,582.9" fill="#1aa8e4" />
<polygon points="543.0,570.0 540.4,577.4 535.6,572.6" fill="#1aa8e4" />
<path d="M584.5,366 C584.5,363 587,362 589,362.5 L593.5,365.5 L589,369.5 C587,370.5 584.5,369.5 584.5,366z" fill="#f4c20d"/>
</svg>
<span class="a" style="left:128.5px;top:80.5px;font-size:10.8px;line-height:13.0px;color:#e8e8e8;text-shadow:0 0 2px #222,0 0 1px #222;-webkit-text-stroke:0.35px #e8e8e8;transform:scaleX(.9);transform-origin:left">Iceland</span>
<span class="a" style="left:442.4px;top:81.5px;font-size:10.8px;line-height:13.0px;color:#e8e8e8;text-shadow:0 0 2px #222,0 0 1px #222;-webkit-text-stroke:0.35px #e8e8e8;transform:scaleX(.9);transform-origin:left">Sweden</span>
<span class="a" style="left:533.0px;top:277.9px;font-size:11px;line-height:13.2px;color:#e8e8e8;text-shadow:0 0 2px #222,0 0 1px #222;-webkit-text-stroke:0.35px #e8e8e8;transform:scaleX(.9);transform-origin:left">Belarus</span>
<span class="a" style="left:458.8px;top:297.4px;font-size:11px;line-height:13.2px;color:#e8e8e8;text-shadow:0 0 2px #222,0 0 1px #222;-webkit-text-stroke:0.35px #e8e8e8;transform:scaleX(.9);transform-origin:left">Poland</span>
<span class="a" style="left:373.3px;top:311.6px;font-size:11px;line-height:13.2px;color:#e8e8e8;text-shadow:0 0 2px #222,0 0 1px #222;-webkit-text-stroke:0.35px #e8e8e8;transform:scaleX(.9);transform-origin:left">Germany</span>
<span class="a" style="left:313.4px;top:355.3px;font-size:11.2px;line-height:13.4px;color:#e8e8e8;text-shadow:0 0 2px #222,0 0 1px #222;-webkit-text-stroke:0.35px #e8e8e8;transform:scaleX(.9);transform-origin:left">France</span>
<span class="a" style="left:259.0px;top:435.0px;font-size:11.2px;line-height:13.4px;color:#e8e8e8;text-shadow:0 0 2px #222,0 0 1px #222;-webkit-text-stroke:0.35px #e8e8e8;transform:scaleX(.9);transform-origin:left">Spain</span>
<span class="a" style="left:313.7px;top:574.4px;font-size:11.2px;line-height:13.4px;color:#e8e8e8;text-shadow:0 0 2px #222,0 0 1px #222;-webkit-text-stroke:0.35px #e8e8e8;transform:scaleX(.9);transform-origin:left">Algeria</span>
<span class="a" style="left:99.3px;top:100.3px;font-size:6.4px;line-height:7.7px;color:#d4d4d4;text-shadow:0 0 2px #222,0 0 1px #222">Reykjavik</span>
<span class="a" style="left:341.3px;top:170.9px;font-size:6.4px;line-height:7.7px;color:#d4d4d4;text-shadow:0 0 2px #222,0 0 1px #222">Berg</span>
<span class="a" style="left:245.0px;top:264.7px;font-size:6.4px;line-height:7.7px;color:#d4d4d4;text-shadow:0 0 2px #222,0 0 1px #222">Belfast</span>
<span class="a" style="left:241.0px;top:282.6px;font-size:6.6px;line-height:7.9px;color:#d4d4d4;text-shadow:0 0 2px #222,0 0 1px #222">Dublin</span>
<span class="a" style="left:412.1px;top:294.6px;font-size:6.4px;line-height:7.7px;color:#d4d4d4;text-shadow:0 0 2px #222,0 0 1px #222">Berlin</span>
<span class="a" style="left:565.5px;top:323.6px;font-size:6.4px;line-height:7.7px;color:#d4d4d4;text-shadow:0 0 2px #222,0 0 1px #222">Kyiv</span>
<span class="a" style="left:620.0px;top:246.8px;font-size:6.6px;line-height:7.9px;color:#d4d4d4;text-shadow:0 0 2px #222,0 0 1px #222">Moscow</span>
<span class="a" style="left:723.0px;top:246.4px;font-size:6.6px;line-height:7.9px;color:#d4d4d4;text-shadow:0 0 2px #222,0 0 1px #222">Kazan</span>
<span class="a" style="left:727.6px;top:285.6px;font-size:6.6px;line-height:7.9px;color:#d4d4d4;text-shadow:0 0 2px #222,0 0 1px #222">Samara</span>
<span class="a" style="left:694.5px;top:308.5px;font-size:6.6px;line-height:7.9px;color:#d4d4d4;text-shadow:0 0 2px #222,0 0 1px #222">Saratov</span>
<span class="a" style="left:785.8px;top:211.0px;font-size:6.6px;line-height:7.9px;color:#d4d4d4;text-shadow:0 0 2px #222,0 0 1px #222">Perm</span>
<span class="a" style="left:807.4px;top:229.9px;font-size:6.8px;line-height:8.2px;color:#d4d4d4;text-shadow:0 0 2px #222,0 0 1px #222">Yekaterinburg</span>
<span class="a" style="left:863.6px;top:225.0px;font-size:6.6px;line-height:7.9px;color:#d4d4d4;text-shadow:0 0 2px #222,0 0 1px #222">Tyumen</span>
<span class="a" style="left:818.6px;top:255.9px;font-size:6.8px;line-height:8.2px;color:#d4d4d4;text-shadow:0 0 2px #222,0 0 1px #222">Chelyabinsk</span>
<span class="a" style="left:786.6px;top:262.6px;font-size:6.6px;line-height:7.9px;color:#d4d4d4;text-shadow:0 0 2px #222,0 0 1px #222">Ufa</span>
<span class="a" style="left:933.7px;top:258.6px;font-size:6.6px;line-height:7.9px;color:#d4d4d4;text-shadow:0 0 2px #222,0 0 1px #222">Omsk</span>
<span class="a" style="left:915.5px;top:314.5px;font-size:6.6px;line-height:7.9px;color:#d4d4d4;text-shadow:0 0 2px #222,0 0 1px #222">Astana</span>
<span class="a" style="left:747.0px;top:26.2px;font-size:6.6px;line-height:7.9px;color:#d4d4d4;text-shadow:0 0 2px #222,0 0 1px #222">Naryan-Mar</span>
<span class="a" style="left:891.0px;top:155.9px;font-size:6.2px;line-height:7.4px;color:#d4d4d4;text-shadow:0 0 2px #222,0 0 1px #222">Khanty-</span>
<span class="a" style="left:890.0px;top:163.7px;font-size:6.2px;line-height:7.4px;color:#d4d4d4;text-shadow:0 0 2px #222,0 0 1px #222">Mansiysk</span>
<span class="a" style="left:932.6px;top:155.8px;font-size:6.4px;line-height:7.7px;color:#d4d4d4;text-shadow:0 0 2px #222,0 0 1px #222">Sur</span>
<span class="a" style="left:286.2px;top:396.1px;font-size:6.4px;line-height:7.7px;color:#d4d4d4;text-shadow:0 0 2px #222,0 0 1px #222">Bordeaux</span>
<span class="a" style="left:243.1px;top:500.0px;font-size:6.6px;line-height:7.9px;color:#d4d4d4;text-shadow:0 0 2px #222,0 0 1px #222">Tangier</span>
<span class="a" style="left:256.9px;top:517.9px;font-size:6.6px;line-height:7.9px;color:#d4d4d4;text-shadow:0 0 2px #222,0 0 1px #222">Fez</span>
<span class="a" style="left:218.0px;top:542.8px;font-size:7px;line-height:8.4px;color:#d4d4d4;text-shadow:0 0 2px #222,0 0 1px #222">Marrakesh</span>
<span class="a" style="left:320.2px;top:488.7px;font-size:6.6px;line-height:7.9px;color:#d4d4d4;text-shadow:0 0 2px #222,0 0 1px #222">Algiers</span>
<span class="a" style="left:172.6px;top:607.0px;font-size:6.6px;line-height:7.9px;color:#d4d4d4;text-shadow:0 0 2px #222,0 0 1px #222">Western</span>
<span class="a" style="left:175.0px;top:616.0px;font-size:6.6px;line-height:7.9px;color:#d4d4d4;text-shadow:0 0 2px #222,0 0 1px #222">Sahara</span>
<span class="a" style="left:332.6px;top:323.2px;font-size:7.2px;line-height:8.6px;color:#d4d4d4;text-shadow:0 0 2px #222,0 0 1px #222">Belgium</span>
<span class="a" style="left:261.0px;top:231.9px;font-size:5.8px;line-height:7.0px;color:#e0e0e0;text-shadow:0 0 2px #222,0 0 1px #222;font-weight:700;letter-spacing:.8px">SCOT.</span>
<span class="a" style="left:262.5px;top:297.7px;font-size:5.8px;line-height:7.0px;color:#e0e0e0;text-shadow:0 0 2px #222,0 0 1px #222;font-weight:700;letter-spacing:.7px">WALES ENG.</span>
<span class="a" style="left:321.9px;top:231.9px;font-size:6.8px;line-height:8.2px;color:#9a9a9a;font-style:italic;letter-spacing:1px">North</span>
<span class="a" style="left:329.0px;top:242.6px;font-size:6.8px;line-height:8.2px;color:#9a9a9a;font-style:italic;letter-spacing:1px">Sea</span>
<span class="a" style="right:924.5px;top:420.2px;font-size:14px;line-height:16px;color:#a8a8a8;font-style:italic;letter-spacing:4.5px">North</span>
<span class="a" style="right:912.1px;top:442.2px;font-size:14px;line-height:16px;color:#a8a8a8;font-style:italic;letter-spacing:4.5px">Atlantic</span>
<span class="a" style="right:922.5px;top:463.6px;font-size:14px;line-height:16px;color:#a8a8a8;font-style:italic;letter-spacing:4.5px">Ocean</span>
<span class="a" style="left:355.5px;top:8.5px;font-size:16px;line-height:18px;color:#4596b5;letter-spacing:3px;-webkit-text-stroke:0;transform:rotate(-51deg);transform-origin:left bottom">Norwegian Sea</span>
<div class="a" style="left:422.0px;top:51.6px;width:15.6px;height:15.6px;border-radius:50%;background:#1d7bd4;border:1px solid #b9c3cc;color:#fff;font-size:5.5px;font-weight:700;text-align:center;line-height:13.6px">1</div>
<div class="a" style="left:492.9px;top:68.4px;width:15.0px;height:15.0px;border-radius:50%;background:#1d7bd4;border:1px solid #b9c3cc;color:#fff;font-size:5.5px;font-weight:700;text-align:center;line-height:13.0px">1</div>
<div class="a" style="left:651.2px;top:87.9px;width:15.0px;height:15.0px;border-radius:50%;background:#1d7bd4;border:1px solid #b9c3cc;color:#fff;font-size:5.5px;font-weight:700;text-align:center;line-height:13.0px">2</div>
<div class="a" style="left:267.8px;top:246.3px;width:21.4px;height:21.4px;border-radius:50%;background:#1d7bd4;border:1px solid #b9c3cc;color:#fff;font-size:7px;font-weight:700;text-align:center;line-height:19.4px">6</div>
<div class="a" style="left:219.1px;top:281.3px;width:21.4px;height:21.4px;border-radius:50%;background:#1d7bd4;border:1px solid #b9c3cc;color:#fff;font-size:7px;font-weight:700;text-align:center;line-height:19.4px">2</div>
<div class="a" style="left:272.3px;top:309.9px;width:21.4px;height:21.4px;border-radius:50%;background:#1d7bd4;border:1px solid #b9c3cc;color:#fff;font-size:7px;font-weight:700;text-align:center;line-height:19.4px">9</div>
<div class="a" style="left:331.0px;top:299.3px;width:22.0px;height:22.0px;border-radius:50%;background:#1d7bd4;border:1px solid #b9c3cc;color:#fff;font-size:7px;font-weight:700;text-align:center;line-height:20.0px">38</div>
<div class="a" style="left:374.1px;top:269.8px;width:22.0px;height:22.0px;border-radius:50%;background:#1d7bd4;border:1px solid #b9c3cc;color:#fff;font-size:7px;font-weight:700;text-align:center;line-height:20.0px">21</div>
<div class="a" style="left:308.0px;top:333.3px;width:15.6px;height:15.6px;border-radius:50%;background:#1d7bd4;border:1px solid #b9c3cc;color:#fff;font-size:5.5px;font-weight:700;text-align:center;line-height:13.6px">3</div>
<div class="a" style="left:458.1px;top:259.5px;width:21.2px;height:21.2px;border-radius:50%;background:#1d7bd4;border:1px solid #b9c3cc;color:#fff;font-size:7px;font-weight:700;text-align:center;line-height:19.2px">27</div>
<div class="a" style="left:426.0px;top:277.2px;width:15.6px;height:15.6px;border-radius:50%;background:#1d7bd4;border:1px solid #b9c3cc;color:#fff;font-size:5.5px;font-weight:700;text-align:center;line-height:13.6px">11</div>
<div class="a" style="left:281.4px;top:365.1px;width:22.0px;height:22.0px;border-radius:50%;background:#1d7bd4;border:1px solid #b9c3cc;color:#fff;font-size:7px;font-weight:700;text-align:center;line-height:20.0px">3</div>
<div class="a" style="left:253.4px;top:404.8px;width:22.0px;height:22.0px;border-radius:50%;background:#1d7bd4;border:1px solid #b9c3cc;color:#fff;font-size:7px;font-weight:700;text-align:center;line-height:20.0px">15</div>
<div class="a" style="left:307.9px;top:434.6px;width:22.0px;height:22.0px;border-radius:50%;background:#1d7bd4;border:1px solid #b9c3cc;color:#fff;font-size:7px;font-weight:700;text-align:center;line-height:20.0px">4</div>
<div class="a" style="left:221.7px;top:452.1px;width:22.0px;height:22.0px;border-radius:50%;background:#1d7bd4;border:1px solid #b9c3cc;color:#fff;font-size:7px;font-weight:700;text-align:center;line-height:20.0px">22</div>
<div class="a" style="left:289.2px;top:484.2px;width:22.0px;height:22.0px;border-radius:50%;background:#1d7bd4;border:1px solid #b9c3cc;color:#fff;font-size:7px;font-weight:700;text-align:center;line-height:20.0px">11</div>
<div class="a" style="left:273.8px;top:501.4px;width:15.0px;height:15.0px;border-radius:50%;background:#1d7bd4;border:1px solid #b9c3cc;color:#fff;font-size:5.5px;font-weight:700;text-align:center;line-height:13.0px">1</div>
<div class="a" style="left:221.6px;top:520.6px;width:23.0px;height:23.0px;border-radius:50%;background:#1d7bd4;border:1px solid #b9c3cc;color:#fff;font-size:7px;font-weight:700;text-align:center;line-height:21.0px">30</div>
<div class="a" style="left:165.6px;top:574.4px;width:15.0px;height:15.0px;border-radius:50%;background:#1d7bd4;border:1px solid #b9c3cc;color:#fff;font-size:5.5px;font-weight:700;text-align:center;line-height:13.0px">1</div>
<div class="a" style="left:338.0px;top:404.0px;width:22.0px;height:22.0px;border-radius:50%;background:#1d7bd4;border:1px solid #b9c3cc;color:#fff;font-size:7px;font-weight:700;text-align:center;line-height:20.0px"></div>
<div class="a" style="left:357.8px;top:100.8px;width:222.5px;height:160.4px;background:#fff;border-radius:2px"></div>
<div class="a" style="left:463.7px;top:259px;width:0;height:0;border-left:6px solid transparent;border-right:6px solid transparent;border-top:7px solid #fff"></div>
<div class="a" style="left:369.6px;top:112.4px;width:199px;height:61.3px;border:1px solid #f0f0f0;border-radius:6px"></div>
<div class="a" style="left:378.2px;top:129px;width:9.5px;height:3.5px;background:#dc143c"></div>
<span class="a" style="left:393px;top:123px;font-size:9.8px;line-height:13px;color:#222">Gdynia, PL</span>
<div class="a" style="left:378.2px;top:142.9px;width:181.7px;height:22.2px;background:#e8effb;border-radius:4px;text-align:center;font-size:9.8px;line-height:22px;color:#3a57c4">9 cargoes</div>
<div class="a" style="left:369.6px;top:181.8px;width:199px;height:61.7px;border:1px solid #f0f0f0;border-radius:6px"></div>
<div class="a" style="left:378.2px;top:198px;width:9.5px;height:3.5px;background:#dc143c"></div>
<span class="a" style="left:393px;top:192px;font-size:9.8px;line-height:13px;color:#222">Gdansk, PL</span>
<div class="a" style="left:378.2px;top:211.8px;width:181.7px;height:22.2px;background:#e8effb;border-radius:4px;text-align:center;font-size:9.8px;line-height:22px;color:#3a57c4">18 cargoes</div>

<div class="a" style="left:843.9px;top:8.8px;width:95.3px;height:123.6px;background:#fff;border-radius:6px"></div>
<svg class="a" style="left:853.6px;top:18.5px" width="10" height="10" viewBox="0 0 10 10"><path d="M5 0l1 1.5 1.7-.6.3 1.8 1.8.3-.6 1.7L10 5l-1.5 1 .6 1.7-1.8.3-.3 1.8-1.7-.6L5 10 4 8.5l-1.7.6L2 7.3.2 7l.6-1.7L0 5l1.5-1-.6-1.7L2.7 2 3 .2l1.7.6z" fill="#222"/><circle cx="5" cy="5" r="1.6" fill="#fff"/></svg>
<span class="a" style="left:869.7px;top:16.5px;font-size:9.8px;font-weight:700;line-height:14px;color:#222">Map settings</span>
<div class="a" style="left:852.8px;top:38px;width:12px;height:12px;border-radius:50%;border:3.2px solid #2a4fcf;background:#fff"></div>
<span class="a" style="left:870.3px;top:37px;font-size:10px;line-height:13px;color:#333">Mercator</span>
<div class="a" style="left:852.8px;top:53.6px;width:12px;height:12px;border-radius:50%;border:1px solid #e2e2e2;background:#fff"></div>
<span class="a" style="left:870.3px;top:52.6px;font-size:10px;line-height:13px;color:#333">Globe</span>
<div class="a" style="left:852.8px;top:73px;width:77px;height:1px;background:#eaeaea"></div>
<div class="a" style="left:852.8px;top:81.2px;width:12px;height:12px;border-radius:50%;border:1px solid #e2e2e2;background:#fff"></div>
<span class="a" style="left:870.3px;top:80.2px;font-size:10px;line-height:13px;color:#333">Light</span>
<div class="a" style="left:852.8px;top:96.8px;width:12px;height:12px;border-radius:50%;border:3.2px solid #2a4fcf;background:#fff"></div>
<span class="a" style="left:870.3px;top:95.8px;font-size:10px;line-height:13px;color:#333">Dark</span>
<div class="a" style="left:852.8px;top:112px;width:12px;height:12px;border-radius:50%;border:1px solid #e2e2e2;background:#fff"></div>
<span class="a" style="left:870.3px;top:111px;font-size:10px;line-height:13px;color:#333">Satellite</span>
</div>
<div class="a" style="left:18px;top:81px;width:1213px;height:6px;background:linear-gradient(#f9f9f9,#ededed)"></div>

<!-- DUBAI PANEL -->
<div id="dubai" class="a" style="left:625px;top:417px;width:1073px;height:508px;background:#fff;overflow:hidden"><div class="a" style="left:0.0px;top:1.0px;width:1061.5px;height:37.0px;background:#fcfcfc"></div>
<div class="a" style="left:606.0px;top:0.0px;width:455.5px;height:1.0px;background:#efefef"></div>
<svg class="a" style="left:6px;top:11px" width="9" height="9" viewBox="0 0 9 9"><path d="M8.5 4.5H1M4.5 1L1 4.5 4.5 8" stroke="#555" stroke-width="1.1" fill="none"/></svg>
<span class="a" style="left:25.0px;top:8.5px;font-size:10.4px;line-height:14.6px;font-weight:700;color:#222">DUBAI NATURE 4 cargoes</span>
<svg class="a" style="left:159px;top:10px" width="11" height="11" viewBox="0 0 11 11"><path d="M1.5 8.2L7.6 2.1a1 1 0 0 1 1.4 0l.9.9a1 1 0 0 1 0 1.4L3.8 10.5H1.5z" fill="#6a86e0"/><path d="M1 10.6h9" stroke="#6a86e0" stroke-width="1.2"/></svg>
<span class="a" style="left:176.0px;top:10.1px;font-size:7.6px;line-height:10.6px;color:#9a9a9a">by Kristin Omholt-Jensen</span>
<div class="a" style="left:6.4px;top:37.6px;width:1055.1px;height:394.4px;border:1px solid #eeeeee;border-bottom:none;border-radius:7px 0 0 0;background:#fff"></div>
<div class="a" style="left:7.4px;top:38.6px;width:1054.1px;height:22.9px;background:#f9f9f9;border-radius:6px 0 0 0"></div>
<div class="a" style="left:6.4px;top:61.3px;width:1055.1px;height:1.0px;background:#f0f0f0"></div>
<span class="a" style="left:73.9px;top:44.0px;font-size:8px;line-height:11.2px;font-weight:700;color:#333">Vessels</span>
<span class="a" style="left:871.7px;top:44.0px;font-size:8px;line-height:11.2px;font-weight:700;color:#333">Cargoes</span>
<span class="a" style="left:907.7px;top:44.0px;font-size:8px;line-height:11.2px;color:#5b79d9">1 hidden</span>
<div class="a" style="left:7.4px;top:62.0px;width:164.1px;height:79.3px;background:#f9f9f9"></div>
<div class="a" style="left:172.5px;top:62.0px;width:889.0px;height:80.3px;background:#f9f9f9"></div>
<div class="a" style="left:172.5px;top:111.0px;width:889.0px;height:1.0px;background:#f0f0f0"></div>
<div class="a" style="left:171.5px;top:38.0px;width:1.0px;height:394.0px;background:#efefef"></div>
<div class="a" style="left:614.1px;top:62.0px;width:1.0px;height:370.0px;background:#efefef"></div>
<div class="a" style="left:835.3px;top:62.0px;width:1.0px;height:370.0px;background:#efefef"></div>
<div class="a" style="left:1056.6px;top:62.0px;width:1.0px;height:370.0px;background:#efefef"></div>
<div class="a" style="left:393.1px;top:111.0px;width:1.0px;height:321.0px;background:#efefef"></div>
<div class="a" style="left:6.4px;top:141.3px;width:165.1px;height:1.0px;background:#efefef"></div>
<div class="a" style="left:6.4px;top:219.2px;width:165.1px;height:1.0px;background:#efefef"></div>
<div class="a" style="left:6.4px;top:298.6px;width:165.1px;height:1.0px;background:#efefef"></div>
<div class="a" style="left:6.4px;top:375.6px;width:165.1px;height:1.0px;background:#efefef"></div>
<div class="a" style="left:172.5px;top:142.3px;width:889.0px;height:1.0px;background:#f2f2f2"></div>
<div class="a" style="left:172.5px;top:220.0px;width:889.0px;height:1.0px;background:#f2f2f2"></div>
<div class="a" style="left:172.5px;top:298.8px;width:889.0px;height:1.0px;background:#f2f2f2"></div>
<div class="a" style="left:172.5px;top:375.6px;width:889.0px;height:1.0px;background:#f2f2f2"></div>
<span class="a" style="right:1036.2px;top:64.2px;font-size:6px;line-height:8px;color:#b8b8b8">$ 15,000</span>
<span class="a" style="right:1036.2px;top:83.4px;font-size:6px;line-height:8px;color:#b8b8b8">$ 10,000</span>
<span class="a" style="right:1036.2px;top:102.6px;font-size:6px;line-height:8px;color:#b8b8b8">$ 5,000</span>
<span class="a" style="right:1036.2px;top:121.4px;font-size:6px;line-height:8px;color:#b8b8b8">$ 0</span>
<div class="a" style="left:41.0px;top:68.4px;width:126.7px;height:0.8px;background:#ececec"></div>
<div class="a" style="left:41.0px;top:87.6px;width:126.7px;height:0.8px;background:#ececec"></div>
<div class="a" style="left:41.0px;top:106.8px;width:126.7px;height:0.8px;background:#ececec"></div>
<div class="a" style="left:41.0px;top:125.3px;width:126.7px;height:1.0px;background:#dcdcdc"></div>
<div class="a" style="left:49.3px;top:68.4px;width:13.0px;height:57.0px;background:#b5e2c6"></div>
<div class="a" style="left:55.6px;top:68.4px;width:0.6px;height:57.0px;background:#a9d9bb"></div>
<div class="a" style="left:62.3px;top:87.9px;width:6.5px;height:37.5px;background:#b7d6f4"></div>
<div class="a" style="left:69.0px;top:68.4px;width:6.0px;height:57.0px;background:#f6eab0"></div>
<div class="a" style="left:91.2px;top:68.4px;width:13.0px;height:57.0px;background:#b5e2c6"></div>
<div class="a" style="left:97.5px;top:68.4px;width:0.6px;height:57.0px;background:#a9d9bb"></div>
<div class="a" style="left:104.2px;top:87.9px;width:6.5px;height:37.5px;background:#b7d6f4"></div>
<div class="a" style="left:110.9px;top:68.4px;width:6.0px;height:57.0px;background:#f6eab0"></div>
<div class="a" style="left:133.4px;top:68.4px;width:13.0px;height:57.0px;background:#b5e2c6"></div>
<div class="a" style="left:139.7px;top:68.4px;width:0.6px;height:57.0px;background:#a9d9bb"></div>
<div class="a" style="left:146.4px;top:87.9px;width:6.5px;height:37.5px;background:#b7d6f4"></div>
<div class="a" style="left:153.1px;top:68.4px;width:6.0px;height:57.0px;background:#f6eab0"></div>
<span class="a" style="left:42.3px;width:40px;text-align:center;top:128.8px;font-size:6px;line-height:8px;color:#b8b8b8">DU NA</span>
<span class="a" style="left:84.2px;width:40px;text-align:center;top:128.8px;font-size:6px;line-height:8px;color:#b8b8b8">DU KN</span>
<span class="a" style="left:126.3px;width:40px;text-align:center;top:128.8px;font-size:6px;line-height:8px;color:#b8b8b8">DU WO</span>
<div class="a" style="left:13.0px;top:152.5px;width:9.0px;height:7.0px;background:linear-gradient(#3b5bd9 0 30%,#fff 30% 45%,#3b5bd9 45%);border-radius:1px;opacity:.8"></div>
<span class="a" style="left:26.0px;top:150.7px;font-size:7.6px;line-height:10.6px;font-weight:700;color:#333">DUBAI NATURE</span>
<div class="a" style="left:158.5px;top:151.5px;width:1.6px;height:9.0px;background:linear-gradient(#777 0 22%,transparent 22% 39%,#777 39% 61%,transparent 61% 78%,#777 78%)"></div>
<div class="a" style="left:13.2px;top:168.9px;width:52.6px;height:11.5px;background:#fff;border:1px solid #ececec;color:#555;box-shadow:0 1px 1px rgba(0,0,0,.04);border-radius:3px;font-size:6.3px;line-height:9.5px;padding-left:6px"><svg style="vertical-align:-1px;margin-right:4px" width="7" height="7" viewBox="0 0 7 7"><path d="M3.5 0L6 6H1z M0 6h7v1H0z" fill="#222"/></svg>63,915 MT</div>
<div class="a" style="left:70.8px;top:168.9px;width:52.0px;height:11.5px;background:#fff;border:1px solid #ececec;color:#555;box-shadow:0 1px 1px rgba(0,0,0,.04);border-radius:3px;font-size:6.3px;line-height:9.5px;padding-left:6px">$ 11,500 / day</div>
<div class="a" style="left:127.2px;top:168.9px;width:35.0px;height:11.5px;background:#e8f0fd;border:1px solid #c5d8f7;color:#2f62d8;font-weight:700;border-radius:3px;font-size:6.3px;line-height:9.5px;padding-left:6px"><svg style="vertical-align:-1px;margin-right:4px" width="7" height="7" viewBox="0 0 7 7"><path d="M1.5 1h4v3h-4z M0 4h7l-1 2.5H1z" fill="#2f62d8"/></svg>Fleet</div>
<svg class="a" style="left:11.5px;top:203.0px" width="7" height="9" viewBox="0 0 7 9"><path d="M3.5 9S0 5 0 3.3a3.5 3.5 0 017 0C7 5 3.5 9 3.5 9z" fill="#222"/><circle cx="3.5" cy="3.3" r="1.2" fill="#fff"/></svg>
<span class="a" style="left:26.0px;top:202.2px;font-size:7.6px;line-height:10.6px;color:#555"><b style="color:#333">Shanghai, CN</b>: 2nd Nov 25</span>
<div class="a" style="left:13.0px;top:230.6px;width:9.0px;height:7.0px;background:linear-gradient(#3b5bd9 0 30%,#fff 30% 45%,#3b5bd9 45%);border-radius:1px;opacity:.8"></div>
<span class="a" style="left:26.0px;top:228.8px;font-size:7.6px;line-height:10.6px;font-weight:700;color:#333">DUBAI KNIGHT</span>
<div class="a" style="left:158.5px;top:229.6px;width:1.6px;height:9.0px;background:linear-gradient(#777 0 22%,transparent 22% 39%,#777 39% 61%,transparent 61% 78%,#777 78%)"></div>
<div class="a" style="left:12.9px;top:246.8px;width:53.4px;height:12.7px;background:#fff;border:1px solid #ececec;color:#555;box-shadow:0 1px 1px rgba(0,0,0,.04);border-radius:3px;font-size:6.3px;line-height:10.7px;padding-left:6px"><svg style="vertical-align:-1px;margin-right:4px" width="7" height="7" viewBox="0 0 7 7"><path d="M3.5 0L6 6H1z M0 6h7v1H0z" fill="#222"/></svg>55,418 MT</div>
<div class="a" style="left:70.8px;top:246.8px;width:53.0px;height:12.7px;background:#fff;border:1px solid #ececec;color:#555;box-shadow:0 1px 1px rgba(0,0,0,.04);border-radius:3px;font-size:6.3px;line-height:10.7px;padding-left:6px">$ 12,000 / day</div>
<div class="a" style="left:128.5px;top:246.8px;width:35.0px;height:12.7px;background:#e8f0fd;border:1px solid #c5d8f7;color:#2f62d8;font-weight:700;border-radius:3px;font-size:6.3px;line-height:10.7px;padding-left:6px"><svg style="vertical-align:-1px;margin-right:4px" width="7" height="7" viewBox="0 0 7 7"><path d="M1.5 1h4v3h-4z M0 4h7l-1 2.5H1z" fill="#2f62d8"/></svg>Fleet</div>
<svg class="a" style="left:11.5px;top:281.1px" width="7" height="9" viewBox="0 0 7 9"><path d="M3.5 9S0 5 0 3.3a3.5 3.5 0 017 0C7 5 3.5 9 3.5 9z" fill="#222"/><circle cx="3.5" cy="3.3" r="1.2" fill="#fff"/></svg>
<span class="a" style="left:26.0px;top:280.3px;font-size:7.6px;line-height:10.6px;color:#555"><b style="color:#333">Trincomalee, LK</b>: 28th Oct 25</span>
<div class="a" style="left:13.0px;top:308.4px;width:9.0px;height:7.0px;background:linear-gradient(#3b5bd9 0 30%,#fff 30% 45%,#3b5bd9 45%);border-radius:1px;opacity:.8"></div>
<span class="a" style="left:26.0px;top:306.6px;font-size:7.6px;line-height:10.6px;font-weight:700;color:#333">DUBAI WORLD</span>
<div class="a" style="left:158.5px;top:307.4px;width:1.6px;height:9.0px;background:linear-gradient(#777 0 22%,transparent 22% 39%,#777 39% 61%,transparent 61% 78%,#777 78%)"></div>
<div class="a" style="left:12.9px;top:324.9px;width:54.2px;height:11.6px;background:#fff;border:1px solid #ececec;color:#555;box-shadow:0 1px 1px rgba(0,0,0,.04);border-radius:3px;font-size:6.3px;line-height:9.6px;padding-left:6px"><svg style="vertical-align:-1px;margin-right:4px" width="7" height="7" viewBox="0 0 7 7"><path d="M3.5 0L6 6H1z M0 6h7v1H0z" fill="#222"/></svg>64,404 MT</div>
<div class="a" style="left:72.1px;top:324.9px;width:53.4px;height:11.6px;background:#fff;border:1px solid #ececec;color:#555;box-shadow:0 1px 1px rgba(0,0,0,.04);border-radius:3px;font-size:6.3px;line-height:9.6px;padding-left:6px">$ 10,000 / day</div>
<svg class="a" style="left:11.5px;top:358.9px" width="7" height="9" viewBox="0 0 7 9"><path d="M3.5 9S0 5 0 3.3a3.5 3.5 0 017 0C7 5 3.5 9 3.5 9z" fill="#222"/><circle cx="3.5" cy="3.3" r="1.2" fill="#fff"/></svg>
<span class="a" style="left:26.0px;top:358.1px;font-size:7.6px;line-height:10.6px;color:#555"><b style="color:#333">Chittagong, BD</b>: 29th Oct 25</span>
<div class="a" style="left:12.9px;top:341.5px;width:35.5px;height:11.9px;background:#e8f0fd;border:1px solid #c5d8f7;color:#2f62d8;font-weight:700;border-radius:3px;font-size:6.3px;line-height:9.9px;padding-left:6px"><svg style="vertical-align:-1px;margin-right:4px" width="7" height="7" viewBox="0 0 7 7"><path d="M1.5 1h4v3h-4z M0 4h7l-1 2.5H1z" fill="#2f62d8"/></svg>Fleet</div>
<svg class="a" style="left:62px;top:409px" width="8" height="8" viewBox="0 0 8 8"><path d="M4 0v8M0 4h8" stroke="#bbb" stroke-width="1"/></svg>
<span class="a" style="left:74.4px;top:407.4px;font-size:8.6px;line-height:12.0px;color:#aaa">Add vessel</span>
<div class="a" style="left:177.7px;top:68.0px;width:432.3px;height:35.0px;background:#fdf3e5;border:1px solid #f9dcae;border-radius:6px"></div>
<span class="a" style="left:182.5px;top:73.3px;font-size:8.4px;line-height:11.8px;color:#333;font-weight:700">45,000 - 55,000 MT Wheat</span>
<div class="a" style="left:182.5px;top:86.8px;width:73.9px;height:11.2px;background:#fff6dc;border:1px solid #fbe3a6;color:#e39b00;font-weight:700;letter-spacing:0;border-radius:3px;font-size:5.9px;line-height:9.2px;padding-left:5px;overflow:hidden"><svg style="vertical-align:-1px;margin-right:5px" width="7" height="7" viewBox="0 0 7 7"><path d="M0 2h6L4.5 .5M7 5H1l1.5 1.5" stroke="#e39b00" stroke-width="1" fill="none"/></svg>IN NEGOTIATION</div>
<div class="a" style="left:261.0px;top:86.8px;width:39.2px;height:11.2px;background:#e4f7f6;border:1px solid #a3e4df;color:#17a29b;border-radius:3px;font-size:5.9px;line-height:9.2px;padding-left:5px;overflow:hidden"><svg style="vertical-align:-1px;margin-right:5px" width="7" height="7" viewBox="0 0 7 7"><rect x="0" y="0" width="7" height="7" rx="1" fill="#14a39c"/><rect x="1.5" y="2" width="4" height="1" fill="#e6f8f7"/></svg>Cargo</div>
<div class="a" style="left:305.1px;top:86.8px;width:74.0px;height:11.2px;background:#fff;border:1px solid #ececec;color:#444;box-shadow:0 1px 1px rgba(0,0,0,.04);border-radius:3px;font-size:5.9px;line-height:9.2px;padding-left:5px;overflow:hidden"><svg style="vertical-align:-1px;margin-right:5px" width="7" height="7" viewBox="0 0 7 7"><rect x="0" y="1" width="7" height="6" fill="#222"/><rect x="1.5" y="0" width="1" height="2" fill="#222"/><rect x="4.5" y="0" width="1" height="2" fill="#222"/></svg>01 - 30 Nov 2025</div>
<div class="a" style="left:600.0px;top:80.5px;width:1.6px;height:9.0px;background:linear-gradient(#777 0 22%,transparent 22% 39%,#777 39% 61%,transparent 61% 78%,#777 78%)"></div>
<span class="a" style="left:623.8px;top:73.2px;font-size:8.1px;line-height:11.3px;color:#333;font-weight:700">44,000 MT Alumina</span>
<div class="a" style="left:623.5px;top:86.8px;width:39.0px;height:11.2px;background:#e4f7f6;border:1px solid #a3e4df;color:#17a29b;border-radius:3px;font-size:5.9px;line-height:9.2px;padding-left:5px;overflow:hidden"><svg style="vertical-align:-1px;margin-right:5px" width="7" height="7" viewBox="0 0 7 7"><rect x="0" y="0" width="7" height="7" rx="1" fill="#14a39c"/><rect x="1.5" y="2" width="4" height="1" fill="#e6f8f7"/></svg>Cargo</div>
<div class="a" style="left:668.2px;top:86.8px;width:73.8px;height:11.2px;background:#fff;border:1px solid #ececec;color:#444;box-shadow:0 1px 1px rgba(0,0,0,.04);border-radius:3px;font-size:5.9px;line-height:9.2px;padding-left:5px;overflow:hidden"><svg style="vertical-align:-1px;margin-right:5px" width="7" height="7" viewBox="0 0 7 7"><rect x="0" y="1" width="7" height="6" fill="#222"/><rect x="1.5" y="0" width="1" height="2" fill="#222"/><rect x="4.5" y="0" width="1" height="2" fill="#222"/></svg>01 - 30 Nov 2025</div>
<div class="a" style="left:821.2px;top:80.5px;width:1.6px;height:9.0px;background:linear-gradient(#777 0 22%,transparent 22% 39%,#777 39% 61%,transparent 61% 78%,#777 78%)"></div>
<span class="a" style="left:844.8px;top:73.1px;font-size:8.3px;line-height:11.6px;color:#333;font-weight:700">45,000 - 55,000 MT Coal</span>
<div class="a" style="left:845.0px;top:86.8px;width:38.3px;height:11.2px;background:#e4f7f6;border:1px solid #a3e4df;color:#17a29b;border-radius:3px;font-size:5.9px;line-height:9.2px;padding-left:5px;overflow:hidden"><svg style="vertical-align:-1px;margin-right:5px" width="7" height="7" viewBox="0 0 7 7"><rect x="0" y="0" width="7" height="7" rx="1" fill="#14a39c"/><rect x="1.5" y="2" width="4" height="1" fill="#e6f8f7"/></svg>Cargo</div>
<div class="a" style="left:888.6px;top:86.8px;width:74.3px;height:11.2px;background:#fff;border:1px solid #ececec;color:#444;box-shadow:0 1px 1px rgba(0,0,0,.04);border-radius:3px;font-size:5.9px;line-height:9.2px;padding-left:5px;overflow:hidden"><svg style="vertical-align:-1px;margin-right:5px" width="7" height="7" viewBox="0 0 7 7"><rect x="0" y="1" width="7" height="6" fill="#222"/><rect x="1.5" y="0" width="1" height="2" fill="#222"/><rect x="4.5" y="0" width="1" height="2" fill="#222"/></svg>01 - 30 Nov 2025</div>
<div class="a" style="left:1042.4px;top:80.5px;width:1.6px;height:9.0px;background:linear-gradient(#777 0 22%,transparent 22% 39%,#777 39% 61%,transparent 61% 78%,#777 78%)"></div>
<div class="a" style="left:177.7px;top:123.0px;width:8.5px;height:6.5px;background:#24339a;box-shadow:inset 3px -3px 0 -2px #fff"></div>
<span class="a" style="left:189.2px;top:120.8px;font-size:7.8px;line-height:10.9px;color:#333;font-weight:700">Albany</span>
<svg class="a" style="left:219.4px;top:122.8px" width="8" height="7" viewBox="0 0 8 7"><path d="M0 3.5h7M4 .5l3 3-3 3" stroke="#333" stroke-width="1.1" fill="none"/></svg>
<div class="a" style="left:231.2px;top:123.0px;width:8.5px;height:6.5px;background:#ee1c25"></div>
<span class="a" style="left:243.5px;top:120.8px;font-size:7.8px;line-height:10.9px;color:#333;font-weight:700">Machong</span>
<div class="a" style="left:378.9px;top:121.8px;width:1.6px;height:9.0px;background:linear-gradient(#777 0 22%,transparent 22% 39%,#777 39% 61%,transparent 61% 78%,#777 78%)"></div>
<div class="a" style="left:398.7px;top:123.0px;width:8.5px;height:6.5px;background:#24339a;box-shadow:inset 3px -3px 0 -2px #fff"></div>
<span class="a" style="left:410.6px;top:120.8px;font-size:7.8px;line-height:10.9px;color:#333;font-weight:700">Kwinana</span>
<svg class="a" style="left:445.9px;top:122.8px" width="8" height="7" viewBox="0 0 8 7"><path d="M0 3.5h7M4 .5l3 3-3 3" stroke="#333" stroke-width="1.1" fill="none"/></svg>
<div class="a" style="left:457.1px;top:123.0px;width:8.5px;height:6.5px;background:#ee1c25"></div>
<span class="a" style="left:470.8px;top:120.8px;font-size:7.8px;line-height:10.9px;color:#333;font-weight:700">Nansha</span>
<div class="a" style="left:600.0px;top:121.8px;width:1.6px;height:9.0px;background:linear-gradient(#777 0 22%,transparent 22% 39%,#777 39% 61%,transparent 61% 78%,#777 78%)"></div>
<div class="a" style="left:619.5px;top:123.0px;width:8.5px;height:6.5px;background:#24339a;box-shadow:inset 3px -3px 0 -2px #fff"></div>
<span class="a" style="left:631.7px;top:120.8px;font-size:7.8px;line-height:10.9px;color:#333;font-weight:700">Oladstone</span>
<svg class="a" style="left:673.9px;top:122.8px" width="8" height="7" viewBox="0 0 8 7"><path d="M0 3.5h7M4 .5l3 3-3 3" stroke="#333" stroke-width="1.1" fill="none"/></svg>
<div class="a" style="left:686.1px;top:123.0px;width:8.5px;height:6.5px;background:linear-gradient(90deg,#e03030 0 25%,#fff 25% 75%,#e03030 75%)"></div>
<span class="a" style="left:697.6px;top:120.8px;font-size:7.8px;line-height:10.9px;color:#333;font-weight:700">Kitimat</span>
<div class="a" style="left:821.2px;top:121.8px;width:1.6px;height:9.0px;background:linear-gradient(#777 0 22%,transparent 22% 39%,#777 39% 61%,transparent 61% 78%,#777 78%)"></div>
<div class="a" style="left:840.6px;top:123.0px;width:8.5px;height:6.5px;background:linear-gradient(#e70011 0 50%,#fff 50%)"></div>
<span class="a" style="left:852.5px;top:120.8px;font-size:7.8px;line-height:10.9px;color:#333;font-weight:700">Tabanco</span>
<svg class="a" style="left:888.6px;top:122.8px" width="8" height="7" viewBox="0 0 8 7"><path d="M0 3.5h7M4 .5l3 3-3 3" stroke="#333" stroke-width="1.1" fill="none"/></svg>
<div class="a" style="left:900.2px;top:123.0px;width:8.5px;height:6.5px;background:linear-gradient(#ff9933 0 33%,#fff 33% 66%,#138808 66%)"></div>
<span class="a" style="left:912.7px;top:120.8px;font-size:7.8px;line-height:10.9px;color:#333;font-weight:700">Paradip</span>
<div class="a" style="left:1042.4px;top:121.8px;width:1.6px;height:9.0px;background:linear-gradient(#777 0 22%,transparent 22% 39%,#777 39% 61%,transparent 61% 78%,#777 78%)"></div>
<div class="a" style="left:177.7px;top:146.4px;width:210.8px;height:68.4px;background:#fff;border:1px solid #bfe5cc;border-radius:6px;overflow:hidden"></div>
<div class="a" style="left:178.7px;top:147.4px;width:208.8px;height:20.2px;background:#e3f3e9;border-radius:5px 5px 0 0"></div>
<div class="a" style="left:179.7px;top:167.6px;width:206.8px;height:21.6px;background:#f9f9f9"></div>
<div class="a" style="left:257.0px;top:167.6px;width:1.0px;height:46.2px;background:#f0f0f0"></div>
<div class="a" style="left:340.7px;top:167.6px;width:1.0px;height:46.2px;background:#f0f0f0"></div>
<span class="a" style="left:187.6px;top:151.8px;font-size:8.2px;line-height:11.5px;color:#333;font-weight:700">$ 15,000 /day</span>
<div class="a" style="left:335.1px;top:151.0px;width:46.0px;height:12.2px;background:#f1fbf0;border:1px solid #c9ecc5;border-radius:3px;color:#3aaa3a;font-size:6.2px;line-height:10px;padding-left:5px;overflow:hidden"><svg style="vertical-align:-1px;margin-right:5px" width="7" height="6" viewBox="0 0 7 6"><path d="M.5 3l2 2L6.5 .8" stroke="#3aaa3a" stroke-width="1.2" fill="none"/></svg>15th Nov</div>
<span class="a" style="left:186.6px;top:172.9px;font-size:7.9px;line-height:11.1px;color:#9a9a9a">Freight rate</span>
<span class="a" style="left:265.7px;top:172.9px;font-size:7.9px;line-height:11.1px;color:#9a9a9a">Intake</span>
<span class="a" style="left:351.0px;top:172.9px;font-size:7.9px;line-height:11.1px;color:#9a9a9a">Days</span>
<span class="a" style="left:190.7px;top:196.5px;font-size:7.8px;line-height:10.9px;color:#333">$ 20.88</span>
<span class="a" style="left:270.2px;top:196.5px;font-size:7.8px;line-height:10.9px;color:#333">55,000MT</span>
<span class="a" style="left:350.3px;top:196.5px;font-size:7.8px;line-height:10.9px;color:#333">40.9</span>
<div class="a" style="left:398.7px;top:146.4px;width:211.3px;height:68.4px;background:#fff;border:1px solid #bfe5cc;border-radius:6px;overflow:hidden"></div>
<div class="a" style="left:399.7px;top:147.4px;width:209.3px;height:20.2px;background:#e3f3e9;border-radius:5px 5px 0 0"></div>
<div class="a" style="left:400.7px;top:167.6px;width:207.3px;height:21.6px;background:#f9f9f9"></div>
<div class="a" style="left:478.0px;top:167.6px;width:1.0px;height:46.2px;background:#f0f0f0"></div>
<div class="a" style="left:561.7px;top:167.6px;width:1.0px;height:46.2px;background:#f0f0f0"></div>
<span class="a" style="left:408.6px;top:151.8px;font-size:8.2px;line-height:11.5px;color:#333;font-weight:700">$ 15,000 /day</span>
<div class="a" style="left:556.6px;top:151.0px;width:46.0px;height:12.2px;background:#f1fbf0;border:1px solid #c9ecc5;border-radius:3px;color:#3aaa3a;font-size:6.2px;line-height:10px;padding-left:5px;overflow:hidden"><svg style="vertical-align:-1px;margin-right:5px" width="7" height="6" viewBox="0 0 7 6"><path d="M.5 3l2 2L6.5 .8" stroke="#3aaa3a" stroke-width="1.2" fill="none"/></svg>15th Nov</div>
<span class="a" style="left:407.6px;top:172.9px;font-size:7.9px;line-height:11.1px;color:#9a9a9a">Freight rate</span>
<span class="a" style="left:486.7px;top:172.9px;font-size:7.9px;line-height:11.1px;color:#9a9a9a">Intake</span>
<span class="a" style="left:572.0px;top:172.9px;font-size:7.9px;line-height:11.1px;color:#9a9a9a">Days</span>
<span class="a" style="left:411.7px;top:196.5px;font-size:7.8px;line-height:10.9px;color:#333">$ 21.01</span>
<span class="a" style="left:491.2px;top:196.5px;font-size:7.8px;line-height:10.9px;color:#333">55,000MT</span>
<span class="a" style="left:571.3px;top:196.5px;font-size:7.8px;line-height:10.9px;color:#333">41.2</span>
<div class="a" style="left:619.5px;top:146.4px;width:211.3px;height:68.4px;background:#fff;border:1px solid #bcd3f4;border-radius:6px;overflow:hidden"></div>
<div class="a" style="left:620.5px;top:147.4px;width:209.3px;height:20.2px;background:#e4eefc;border-radius:5px 5px 0 0"></div>
<div class="a" style="left:621.5px;top:167.6px;width:207.3px;height:21.6px;background:#f9f9f9"></div>
<div class="a" style="left:698.8px;top:167.6px;width:1.0px;height:46.2px;background:#f0f0f0"></div>
<div class="a" style="left:782.5px;top:167.6px;width:1.0px;height:46.2px;background:#f0f0f0"></div>
<span class="a" style="left:629.4px;top:151.8px;font-size:8.2px;line-height:11.5px;color:#333;font-weight:700">$ 10,000 /day</span>
<div class="a" style="left:777.4px;top:151.0px;width:46.0px;height:12.2px;background:#f1fbf0;border:1px solid #c9ecc5;border-radius:3px;color:#3aaa3a;font-size:6.2px;line-height:10px;padding-left:5px;overflow:hidden"><svg style="vertical-align:-1px;margin-right:5px" width="7" height="6" viewBox="0 0 7 6"><path d="M.5 3l2 2L6.5 .8" stroke="#3aaa3a" stroke-width="1.2" fill="none"/></svg>15th Nov</div>
<span class="a" style="left:628.4px;top:172.9px;font-size:7.9px;line-height:11.1px;color:#9a9a9a">Freight rate</span>
<span class="a" style="left:707.5px;top:172.9px;font-size:7.9px;line-height:11.1px;color:#9a9a9a">Intake</span>
<span class="a" style="left:792.8px;top:172.9px;font-size:7.9px;line-height:11.1px;color:#9a9a9a">Days</span>
<span class="a" style="left:632.5px;top:196.5px;font-size:7.8px;line-height:10.9px;color:#333">$ 26.10</span>
<span class="a" style="left:712.0px;top:196.5px;font-size:7.8px;line-height:10.9px;color:#333">44,000MT</span>
<span class="a" style="left:792.1px;top:196.5px;font-size:7.8px;line-height:10.9px;color:#333">49.5</span>
<div class="a" style="left:841.3px;top:146.4px;width:209.8px;height:68.4px;background:#fff;border:1px solid #f2e8bd;border-radius:6px;overflow:hidden"></div>
<div class="a" style="left:842.3px;top:147.4px;width:207.8px;height:20.2px;background:#fbf8e7;border-radius:5px 5px 0 0"></div>
<div class="a" style="left:843.3px;top:167.6px;width:205.8px;height:21.6px;background:#f9f9f9"></div>
<div class="a" style="left:920.6px;top:167.6px;width:1.0px;height:46.2px;background:#f0f0f0"></div>
<div class="a" style="left:1004.3px;top:167.6px;width:1.0px;height:46.2px;background:#f0f0f0"></div>
<span class="a" style="left:851.2px;top:151.8px;font-size:8.2px;line-height:11.5px;color:#333;font-weight:700">$ 15,000 /day</span>
<div class="a" style="left:997.7px;top:151.0px;width:46.0px;height:12.2px;background:#f1fbf0;border:1px solid #c9ecc5;border-radius:3px;color:#3aaa3a;font-size:6.2px;line-height:10px;padding-left:5px;overflow:hidden"><svg style="vertical-align:-1px;margin-right:5px" width="7" height="6" viewBox="0 0 7 6"><path d="M.5 3l2 2L6.5 .8" stroke="#3aaa3a" stroke-width="1.2" fill="none"/></svg>10th Nov</div>
<span class="a" style="left:850.2px;top:172.9px;font-size:7.9px;line-height:11.1px;color:#9a9a9a">Freight rate</span>
<span class="a" style="left:929.3px;top:172.9px;font-size:7.9px;line-height:11.1px;color:#9a9a9a">Intake</span>
<span class="a" style="left:1014.6px;top:172.9px;font-size:7.9px;line-height:11.1px;color:#9a9a9a">Days</span>
<span class="a" style="left:854.3px;top:196.5px;font-size:7.8px;line-height:10.9px;color:#333">$ 14.13</span>
<span class="a" style="left:933.8px;top:196.5px;font-size:7.8px;line-height:10.9px;color:#333">55,000MT</span>
<span class="a" style="left:1013.9px;top:196.5px;font-size:7.8px;line-height:10.9px;color:#333">29.2</span>
<div class="a" style="left:177.7px;top:224.2px;width:210.8px;height:67.8px;background:#fff;border:1px solid #bfe5cc;border-radius:6px;overflow:hidden"></div>
<div class="a" style="left:178.7px;top:225.2px;width:208.8px;height:20.1px;background:#e3f3e9;border-radius:5px 5px 0 0"></div>
<div class="a" style="left:179.7px;top:245.3px;width:206.8px;height:22.4px;background:#f9f9f9"></div>
<div class="a" style="left:257.0px;top:245.3px;width:1.0px;height:45.7px;background:#f0f0f0"></div>
<div class="a" style="left:340.7px;top:245.3px;width:1.0px;height:45.7px;background:#f0f0f0"></div>
<span class="a" style="left:187.6px;top:229.5px;font-size:8.2px;line-height:11.5px;color:#333;font-weight:700">$ 15,000 /day</span>
<div class="a" style="left:335.1px;top:228.8px;width:46.0px;height:12.2px;background:#f1fbf0;border:1px solid #c9ecc5;border-radius:3px;color:#3aaa3a;font-size:6.2px;line-height:10px;padding-left:5px;overflow:hidden"><svg style="vertical-align:-1px;margin-right:5px" width="7" height="6" viewBox="0 0 7 6"><path d="M.5 3l2 2L6.5 .8" stroke="#3aaa3a" stroke-width="1.2" fill="none"/></svg>7th Nov</div>
<span class="a" style="left:186.6px;top:251.0px;font-size:7.9px;line-height:11.1px;color:#9a9a9a">Freight rate</span>
<span class="a" style="left:265.7px;top:251.0px;font-size:7.9px;line-height:11.1px;color:#9a9a9a">Intake</span>
<span class="a" style="left:351.0px;top:251.0px;font-size:7.9px;line-height:11.1px;color:#9a9a9a">Days</span>
<span class="a" style="left:190.7px;top:274.4px;font-size:7.8px;line-height:10.9px;color:#333">$ 22.50</span>
<span class="a" style="left:270.2px;top:274.4px;font-size:7.8px;line-height:10.9px;color:#333">53,256MT</span>
<span class="a" style="left:350.3px;top:274.4px;font-size:7.8px;line-height:10.9px;color:#333">35.6</span>
<div class="a" style="left:398.7px;top:224.2px;width:211.3px;height:67.8px;background:#fff;border:1px solid #bfe5cc;border-radius:6px;overflow:hidden"></div>
<div class="a" style="left:399.7px;top:225.2px;width:209.3px;height:20.1px;background:#e3f3e9;border-radius:5px 5px 0 0"></div>
<div class="a" style="left:400.7px;top:245.3px;width:207.3px;height:22.4px;background:#f9f9f9"></div>
<div class="a" style="left:478.0px;top:245.3px;width:1.0px;height:45.7px;background:#f0f0f0"></div>
<div class="a" style="left:561.7px;top:245.3px;width:1.0px;height:45.7px;background:#f0f0f0"></div>
<span class="a" style="left:408.6px;top:229.5px;font-size:8.2px;line-height:11.5px;color:#333;font-weight:700">$ 15,000 /day</span>
<div class="a" style="left:556.6px;top:228.8px;width:46.0px;height:12.2px;background:#f1fbf0;border:1px solid #c9ecc5;border-radius:3px;color:#3aaa3a;font-size:6.2px;line-height:10px;padding-left:5px;overflow:hidden"><svg style="vertical-align:-1px;margin-right:5px" width="7" height="6" viewBox="0 0 7 6"><path d="M.5 3l2 2L6.5 .8" stroke="#3aaa3a" stroke-width="1.2" fill="none"/></svg>6th Nov</div>
<span class="a" style="left:407.6px;top:251.0px;font-size:7.9px;line-height:11.1px;color:#9a9a9a">Freight rate</span>
<span class="a" style="left:486.7px;top:251.0px;font-size:7.9px;line-height:11.1px;color:#9a9a9a">Intake</span>
<span class="a" style="left:572.0px;top:251.0px;font-size:7.9px;line-height:11.1px;color:#9a9a9a">Days</span>
<span class="a" style="left:411.7px;top:274.4px;font-size:7.8px;line-height:10.9px;color:#333">$ 22.48</span>
<span class="a" style="left:491.2px;top:274.4px;font-size:7.8px;line-height:10.9px;color:#333">53,256MT</span>
<span class="a" style="left:571.3px;top:274.4px;font-size:7.8px;line-height:10.9px;color:#333">36.2</span>
<div class="a" style="left:619.5px;top:224.2px;width:211.3px;height:67.8px;background:#fff;border:1px solid #bcd3f4;border-radius:6px;overflow:hidden"></div>
<div class="a" style="left:620.5px;top:225.2px;width:209.3px;height:20.1px;background:#e4eefc;border-radius:5px 5px 0 0"></div>
<div class="a" style="left:621.5px;top:245.3px;width:207.3px;height:22.4px;background:#f9f9f9"></div>
<div class="a" style="left:698.8px;top:245.3px;width:1.0px;height:45.7px;background:#f0f0f0"></div>
<div class="a" style="left:782.5px;top:245.3px;width:1.0px;height:45.7px;background:#f0f0f0"></div>
<span class="a" style="left:629.4px;top:229.5px;font-size:8.2px;line-height:11.5px;color:#333;font-weight:700">$ 10,000 /day</span>
<div class="a" style="left:777.4px;top:228.8px;width:46.0px;height:12.2px;background:#f1fbf0;border:1px solid #c9ecc5;border-radius:3px;color:#3aaa3a;font-size:6.2px;line-height:10px;padding-left:5px;overflow:hidden"><svg style="vertical-align:-1px;margin-right:5px" width="7" height="6" viewBox="0 0 7 6"><path d="M.5 3l2 2L6.5 .8" stroke="#3aaa3a" stroke-width="1.2" fill="none"/></svg>10th Nov</div>
<span class="a" style="left:628.4px;top:251.0px;font-size:7.9px;line-height:11.1px;color:#9a9a9a">Freight rate</span>
<span class="a" style="left:707.5px;top:251.0px;font-size:7.9px;line-height:11.1px;color:#9a9a9a">Intake</span>
<span class="a" style="left:792.8px;top:251.0px;font-size:7.9px;line-height:11.1px;color:#9a9a9a">Days</span>
<span class="a" style="left:632.5px;top:274.4px;font-size:7.8px;line-height:10.9px;color:#333">$ 32.41</span>
<span class="a" style="left:712.0px;top:274.4px;font-size:7.8px;line-height:10.9px;color:#333">44,000MT</span>
<span class="a" style="left:792.1px;top:274.4px;font-size:7.8px;line-height:10.9px;color:#333">49.9</span>
<div class="a" style="left:841.3px;top:224.2px;width:209.8px;height:67.8px;background:#fff;border:1px solid #f2e8bd;border-radius:6px;overflow:hidden"></div>
<div class="a" style="left:842.3px;top:225.2px;width:207.8px;height:20.1px;background:#fbf8e7;border-radius:5px 5px 0 0"></div>
<div class="a" style="left:843.3px;top:245.3px;width:205.8px;height:22.4px;background:#f9f9f9"></div>
<div class="a" style="left:920.6px;top:245.3px;width:1.0px;height:45.7px;background:#f0f0f0"></div>
<div class="a" style="left:1004.3px;top:245.3px;width:1.0px;height:45.7px;background:#f0f0f0"></div>
<span class="a" style="left:851.2px;top:229.5px;font-size:8.2px;line-height:11.5px;color:#333;font-weight:700">$ 15,000 /day</span>
<div class="a" style="left:997.7px;top:228.8px;width:46.0px;height:12.2px;background:#f1fbf0;border:1px solid #c9ecc5;border-radius:3px;color:#3aaa3a;font-size:6.2px;line-height:10px;padding-left:5px;overflow:hidden"><svg style="vertical-align:-1px;margin-right:5px" width="7" height="6" viewBox="0 0 7 6"><path d="M.5 3l2 2L6.5 .8" stroke="#3aaa3a" stroke-width="1.2" fill="none"/></svg>3rd Nov</div>
<span class="a" style="left:850.2px;top:251.0px;font-size:7.9px;line-height:11.1px;color:#9a9a9a">Freight rate</span>
<span class="a" style="left:929.3px;top:251.0px;font-size:7.9px;line-height:11.1px;color:#9a9a9a">Intake</span>
<span class="a" style="left:1014.6px;top:251.0px;font-size:7.9px;line-height:11.1px;color:#9a9a9a">Days</span>
<span class="a" style="left:854.3px;top:274.4px;font-size:7.8px;line-height:10.9px;color:#333">$ 15.43</span>
<span class="a" style="left:933.8px;top:274.4px;font-size:7.8px;line-height:10.9px;color:#333">54,668MT</span>
<span class="a" style="left:1013.9px;top:274.4px;font-size:7.8px;line-height:10.9px;color:#333">27.3</span>
<div class="a" style="left:177.7px;top:303.0px;width:210.8px;height:67.1px;background:#fff;border:1px solid #bfe5cc;border-radius:6px;overflow:hidden"></div>
<div class="a" style="left:178.7px;top:304.0px;width:208.8px;height:20.4px;background:#e3f3e9;border-radius:5px 5px 0 0"></div>
<div class="a" style="left:179.7px;top:324.4px;width:206.8px;height:20.8px;background:#f9f9f9"></div>
<div class="a" style="left:257.0px;top:324.4px;width:1.0px;height:44.7px;background:#f0f0f0"></div>
<div class="a" style="left:340.7px;top:324.4px;width:1.0px;height:44.7px;background:#f0f0f0"></div>
<span class="a" style="left:187.6px;top:308.5px;font-size:8.2px;line-height:11.5px;color:#333;font-weight:700">$ 15,000 /day</span>
<div class="a" style="left:335.1px;top:307.7px;width:46.0px;height:12.2px;background:#f1fbf0;border:1px solid #c9ecc5;border-radius:3px;color:#3aaa3a;font-size:6.2px;line-height:10px;padding-left:5px;overflow:hidden"><svg style="vertical-align:-1px;margin-right:5px" width="7" height="6" viewBox="0 0 7 6"><path d="M.5 3l2 2L6.5 .8" stroke="#3aaa3a" stroke-width="1.2" fill="none"/></svg>11th Nov</div>
<span class="a" style="left:186.6px;top:329.3px;font-size:7.9px;line-height:11.1px;color:#9a9a9a">Freight rate</span>
<span class="a" style="left:265.7px;top:329.3px;font-size:7.9px;line-height:11.1px;color:#9a9a9a">Intake</span>
<span class="a" style="left:351.0px;top:329.3px;font-size:7.9px;line-height:11.1px;color:#9a9a9a">Days</span>
<span class="a" style="left:190.7px;top:352.2px;font-size:7.8px;line-height:10.9px;color:#333">$ 20.84</span>
<span class="a" style="left:270.2px;top:352.2px;font-size:7.8px;line-height:10.9px;color:#333">55,000MT</span>
<span class="a" style="left:350.3px;top:352.2px;font-size:7.8px;line-height:10.9px;color:#333">41.9</span>
<div class="a" style="left:398.7px;top:303.0px;width:211.3px;height:67.1px;background:#fff;border:1px solid #bfe5cc;border-radius:6px;overflow:hidden"></div>
<div class="a" style="left:399.7px;top:304.0px;width:209.3px;height:20.4px;background:#e3f3e9;border-radius:5px 5px 0 0"></div>
<div class="a" style="left:400.7px;top:324.4px;width:207.3px;height:20.8px;background:#f9f9f9"></div>
<div class="a" style="left:478.0px;top:324.4px;width:1.0px;height:44.7px;background:#f0f0f0"></div>
<div class="a" style="left:561.7px;top:324.4px;width:1.0px;height:44.7px;background:#f0f0f0"></div>
<span class="a" style="left:408.6px;top:308.5px;font-size:8.2px;line-height:11.5px;color:#333;font-weight:700">$ 15,000 /day</span>
<div class="a" style="left:556.6px;top:307.7px;width:46.0px;height:12.2px;background:#f1fbf0;border:1px solid #c9ecc5;border-radius:3px;color:#3aaa3a;font-size:6.2px;line-height:10px;padding-left:5px;overflow:hidden"><svg style="vertical-align:-1px;margin-right:5px" width="7" height="6" viewBox="0 0 7 6"><path d="M.5 3l2 2L6.5 .8" stroke="#3aaa3a" stroke-width="1.2" fill="none"/></svg>10th Nov</div>
<span class="a" style="left:407.6px;top:329.3px;font-size:7.9px;line-height:11.1px;color:#9a9a9a">Freight rate</span>
<span class="a" style="left:486.7px;top:329.3px;font-size:7.9px;line-height:11.1px;color:#9a9a9a">Intake</span>
<span class="a" style="left:572.0px;top:329.3px;font-size:7.9px;line-height:11.1px;color:#9a9a9a">Days</span>
<span class="a" style="left:411.7px;top:352.2px;font-size:7.8px;line-height:10.9px;color:#333">$ 20.77</span>
<span class="a" style="left:491.2px;top:352.2px;font-size:7.8px;line-height:10.9px;color:#333">55,000MT</span>
<span class="a" style="left:571.3px;top:352.2px;font-size:7.8px;line-height:10.9px;color:#333">41.4</span>
<div class="a" style="left:619.5px;top:303.0px;width:211.3px;height:67.1px;background:#fff;border:1px solid #bcd3f4;border-radius:6px;overflow:hidden"></div>
<div class="a" style="left:620.5px;top:304.0px;width:209.3px;height:20.4px;background:#e4eefc;border-radius:5px 5px 0 0"></div>
<div class="a" style="left:621.5px;top:324.4px;width:207.3px;height:20.8px;background:#f9f9f9"></div>
<div class="a" style="left:698.8px;top:324.4px;width:1.0px;height:44.7px;background:#f0f0f0"></div>
<div class="a" style="left:782.5px;top:324.4px;width:1.0px;height:44.7px;background:#f0f0f0"></div>
<span class="a" style="left:629.4px;top:308.5px;font-size:8.2px;line-height:11.5px;color:#333;font-weight:700">$ 10,000 /day</span>
<div class="a" style="left:777.4px;top:307.7px;width:46.0px;height:12.2px;background:#f1fbf0;border:1px solid #c9ecc5;border-radius:3px;color:#3aaa3a;font-size:6.2px;line-height:10px;padding-left:5px;overflow:hidden"><svg style="vertical-align:-1px;margin-right:5px" width="7" height="6" viewBox="0 0 7 6"><path d="M.5 3l2 2L6.5 .8" stroke="#3aaa3a" stroke-width="1.2" fill="none"/></svg>17th Nov</div>
<span class="a" style="left:628.4px;top:329.3px;font-size:7.9px;line-height:11.1px;color:#9a9a9a">Freight rate</span>
<span class="a" style="left:707.5px;top:329.3px;font-size:7.9px;line-height:11.1px;color:#9a9a9a">Intake</span>
<span class="a" style="left:792.8px;top:329.3px;font-size:7.9px;line-height:11.1px;color:#9a9a9a">Days</span>
<span class="a" style="left:632.5px;top:352.2px;font-size:7.8px;line-height:10.9px;color:#333">$ 28.96</span>
<span class="a" style="left:712.0px;top:352.2px;font-size:7.8px;line-height:10.9px;color:#333">44,000MT</span>
<span class="a" style="left:792.1px;top:352.2px;font-size:7.8px;line-height:10.9px;color:#333">57.7</span>
<div class="a" style="left:841.3px;top:303.0px;width:209.8px;height:67.1px;background:#fff;border:1px solid #f2e8bd;border-radius:6px;overflow:hidden"></div>
<div class="a" style="left:842.3px;top:304.0px;width:207.8px;height:20.4px;background:#fbf8e7;border-radius:5px 5px 0 0"></div>
<div class="a" style="left:843.3px;top:324.4px;width:205.8px;height:20.8px;background:#f9f9f9"></div>
<div class="a" style="left:920.6px;top:324.4px;width:1.0px;height:44.7px;background:#f0f0f0"></div>
<div class="a" style="left:1004.3px;top:324.4px;width:1.0px;height:44.7px;background:#f0f0f0"></div>
<span class="a" style="left:851.2px;top:308.5px;font-size:8.2px;line-height:11.5px;color:#333;font-weight:700">$ 15,000 /day</span>
<div class="a" style="left:997.7px;top:307.7px;width:46.0px;height:12.2px;background:#f1fbf0;border:1px solid #c9ecc5;border-radius:3px;color:#3aaa3a;font-size:6.2px;line-height:10px;padding-left:5px;overflow:hidden"><svg style="vertical-align:-1px;margin-right:5px" width="7" height="6" viewBox="0 0 7 6"><path d="M.5 3l2 2L6.5 .8" stroke="#3aaa3a" stroke-width="1.2" fill="none"/></svg>5th Nov</div>
<span class="a" style="left:850.2px;top:329.3px;font-size:7.9px;line-height:11.1px;color:#9a9a9a">Freight rate</span>
<span class="a" style="left:929.3px;top:329.3px;font-size:7.9px;line-height:11.1px;color:#9a9a9a">Intake</span>
<span class="a" style="left:1014.6px;top:329.3px;font-size:7.9px;line-height:11.1px;color:#9a9a9a">Days</span>
<span class="a" style="left:854.3px;top:352.2px;font-size:7.8px;line-height:10.9px;color:#333">$ 14.14</span>
<span class="a" style="left:933.8px;top:352.2px;font-size:7.8px;line-height:10.9px;color:#333">55,000MT</span>
<span class="a" style="left:1013.9px;top:352.2px;font-size:7.8px;line-height:10.9px;color:#333">29.8</span></div>

<!-- DROPDOWN -->
<div id="dd" class="a" style="left:281px;top:718px;width:344px;height:170px;background:#f6f6f6"><div class="a" style="left:3px;top:5.5px;width:335px;height:159px;background:#fff;border-radius:7px;box-shadow:0 1px 4px rgba(0,0,0,.10)"></div><svg class="a" style="left:22px;top:20.700000000000045px" width="15" height="15" viewBox="0 0 15 15"><path d="M7.5 1.2v1.3" stroke="#222" stroke-width="1"/><path d="M2.2 10.5C2.2 5.5 4.5 2.8 7.5 2.8S12.8 5.5 12.8 10.5z" fill="#222"/><rect x="4.3" y="5.6" width="6.4" height="1.6" rx=".5" fill="#fff"/><rect x="0.8" y="11.8" width="13.4" height="1.9" rx=".6" fill="#222"/></svg><span class="a" style="left:49.3px;top:17.700000000000045px;font-size:16.4px;line-height:22px;color:#2a2a2a;letter-spacing:.3px">From team fleet</span><svg class="a" style="left:22px;top:59.89999999999998px" width="15" height="12" viewBox="0 0 15 12"><path d="M0 1h2.5M4.5 1H15M0 6h2.5M4.5 6H15M0 11h2.5M4.5 11H15" stroke="#222" stroke-width="1.8"/></svg><span class="a" style="left:49.3px;top:54.89999999999998px;font-size:16.4px;line-height:22px;color:#2a2a2a;letter-spacing:.3px">From Vessel Lists</span><svg class="a" style="left:22px;top:95.60000000000002px" width="15" height="15" viewBox="0 0 15 15"><path d="M7.5 1.2v1.3" stroke="#222" stroke-width="1"/><path d="M2.2 10.5C2.2 5.5 4.5 2.8 7.5 2.8S12.8 5.5 12.8 10.5z" fill="#222"/><rect x="4.3" y="5.6" width="6.4" height="1.6" rx=".5" fill="#fff"/><rect x="0.8" y="11.8" width="13.4" height="1.9" rx=".6" fill="#222"/></svg><span class="a" style="left:49.3px;top:92.60000000000002px;font-size:16.4px;line-height:22px;color:#2a2a2a;letter-spacing:.3px">From TC in</span><svg class="a" style="left:23px;top:133.60000000000002px" width="14" height="14" viewBox="0 0 14 14"><circle cx="6" cy="6" r="4.6" stroke="#222" stroke-width="1.8" fill="none"/><path d="M9.3 9.3L13 13" stroke="#222" stroke-width="1.9"/></svg><span class="a" style="left:49.3px;top:129.60000000000002px;font-size:16.4px;line-height:22px;color:#2a2a2a;letter-spacing:.3px">From all the market</span></div>
</body></html>
